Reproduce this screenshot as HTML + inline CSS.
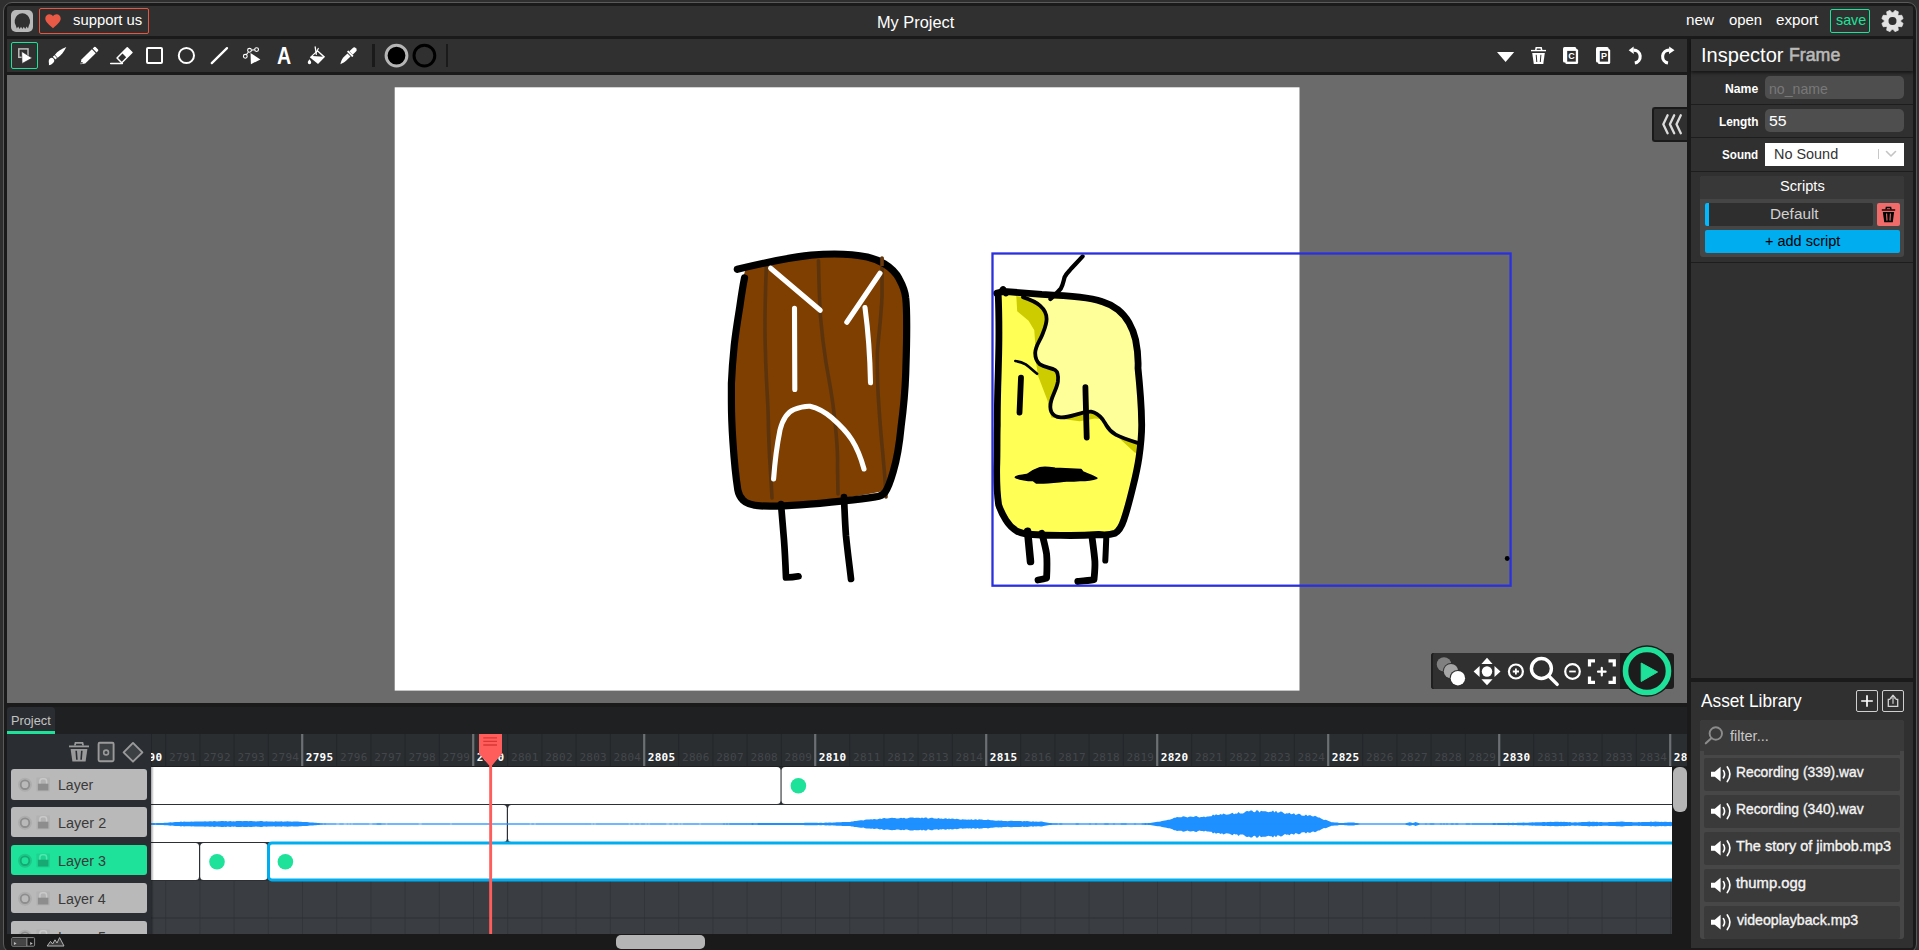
<!DOCTYPE html>
<html lang="en">
<head>
<meta charset="utf-8">
<title>My Project - Wick Editor</title>
<style>
*{box-sizing:border-box;margin:0;padding:0}
html,body{width:1919px;height:950px;overflow:hidden;background:#2f2f2f}
body{position:relative;font-family:"Liberation Sans",sans-serif;color:#fff;font-size:15px}
.abs{position:absolute}
#winframe{position:absolute;left:3px;top:2px;width:1914px;height:950.500px;border:1px solid #5a5a5a;border-radius:9px;background:#1a1a1a}
.panel{position:absolute;background:#303030}
.t{position:absolute;white-space:nowrap;line-height:1}
svg{position:absolute;overflow:visible}
</style>
</head>
<body>
<div id="winframe"></div>
<!-- ===== menu bar ===== -->
<div class="panel" id="menubar" style="left:7px;top:6px;width:1906px;height:30px;border-radius:2px 2px 0 0"></div>
<div class="abs" id="logo" style="left:11px;top:10px;width:22px;height:22px;border-radius:5px;background:#b9b9b9"></div>
<svg style="left:11px;top:10px" width="22" height="22" viewBox="0 0 22 22"><path d="M4.800 15.600 A7.700 8.100 0 1 1 17.900 15.600 L17 18.600 L15.600 16.600 L14.200 19 L12.800 16.700 L11.400 19 L10 16.700 L8.600 19 L7.200 16.600 L5.800 18.600 Z" fill="#303030"/></svg>
<div class="abs" id="support" style="left:39px;top:8px;width:110px;height:26px;border:1px solid #e8563f;border-radius:2px"></div>
<svg style="left:45px;top:14px" width="16" height="15" viewBox="0 0 16 15"><path d="M8 14.200C3.500 10.300.3 7.700.3 4.500.3 2 2.200.3 4.400.3c1.400 0 2.700.7 3.600 1.900C8.900 1 10.200.3 11.600.3c2.200 0 4.100 1.700 4.100 4.200 0 3.200-3.200 5.800-7.700 9.700z" fill="#e85a45"/></svg>
<div class="abs" style="left:1830px;top:9px;width:40px;height:24px;border:1px solid #1ee29a;border-radius:2px"></div>
<svg id="gear" style="left:0;top:0" width="1919" height="40" viewBox="0 0 1919 40"><path fill="#e2e2e2" stroke="#e2e2e2" stroke-width="0.800" stroke-linejoin="round" fill-rule="evenodd" d="M1893.00 12.82 L1894.95 10.38 L1898.28 11.76 L1897.93 14.86 L1898.64 15.57 L1901.74 15.22 L1903.12 18.55 L1900.68 20.50 L1900.68 21.50 L1903.12 23.45 L1901.74 26.78 L1898.64 26.43 L1897.93 27.14 L1898.28 30.24 L1894.95 31.62 L1893.00 29.18 L1892.00 29.18 L1890.05 31.62 L1886.72 30.24 L1887.07 27.14 L1886.36 26.43 L1883.26 26.78 L1881.88 23.45 L1884.32 21.50 L1884.32 20.50 L1881.88 18.55 L1883.26 15.22 L1886.36 15.57 L1887.07 14.86 L1886.72 11.76 L1890.05 10.38 L1892.00 12.82 Z M1888.50 21.00 a4 4 0 1 0 8 0 a4 4 0 1 0 -8 0 Z"/><circle cx="1892.5" cy="21.0" r="3.900" fill="#303030"/></svg>
<!-- ===== toolbar ===== -->
<div class="panel" id="toolbar" style="left:7px;top:39px;width:1680px;height:33px"></div>
<div class="abs" style="left:11px;top:42px;width:27px;height:27px;border:1px solid #1ee29a;border-radius:2px"></div>
<svg id="tools" style="left:0;top:0" width="1700" height="80" viewBox="0 0 1700 80">
 <!-- cursor/select -->
 <rect x="18.800" y="48.900" width="9.200" height="8.400" fill="none" stroke="#bdbdbd" stroke-width="1.500"/>
 <path d="M21.600 51.400 L22.100 63.500 L32.100 58.100 Z" fill="#fff" stroke="#303030" stroke-width="0.600"/>
 <!-- brush -->
 <g transform="translate(57 55.500) rotate(-42.200)" fill="#fff">
  <path d="M-12.600 1.800 C-11 1.200 -10.400 -2.500 -7.300 -2.500 C-5.600 -2.500 -4.700 -1.600 -4.700 0 C-4.700 1.800 -6 2.900 -8 2.900 C-10 2.900 -11.800 2.600 -12.600 1.800 Z"/>
  <rect x="-3.900" y="-1.900" width="2.200" height="3.800"/>
  <path d="M-1 -2 C3 -2.800 8 -1.700 12.600 0 C8 1.700 3 2.800 -1 2 Z"/>
 </g>
 <!-- pencil -->
 <g transform="translate(88.700 56.200) rotate(-44.100)" fill="#fff">
  <path d="M-11.400 0 L-7.500 -2.750 L7.100 -2.750 L7.100 2.750 L-7.500 2.750 Z"/>
  <circle cx="-9.500" cy="0" r="0.850" fill="#303030"/>
  <path d="M8.200 -2.750 L10.300 -2.750 Q11.300 -2.750 11.300 -1.750 L11.300 1.750 Q11.300 2.750 10.300 2.750 L8.200 2.750 Z"/>
 </g>
 <!-- eraser -->
 <g transform="translate(124.500 55.200) rotate(-45)">
  <rect x="-8" y="-4.100" width="16" height="8.200" rx="0.800" fill="#fff"/>
  <rect x="-6.500" y="-2.600" width="6.300" height="5.200" fill="#303030"/>
 </g>
 <path d="M110.700 63.400 L122.400 63.400" stroke="#fff" stroke-width="1.500" stroke-linecap="round"/>
 <!-- rect -->
 <rect x="147" y="48" width="15" height="15" rx="1" fill="none" stroke="#fff" stroke-width="2"/>
 <!-- ellipse -->
 <circle cx="186.400" cy="55.500" r="7.600" fill="none" stroke="#fff" stroke-width="2"/>
 <!-- line -->
 <path d="M211.800 63.100 L227 48.100" stroke="#fff" stroke-width="2.300" stroke-linecap="round"/>
 <!-- path cursor -->
 <g fill="none" stroke="#fff" stroke-width="1.100">
  <path d="M246.300 54.600 L248.500 52 M251.500 50.100 L254.600 49.800"/>
  <circle cx="245.300" cy="56.300" r="1.900"/><circle cx="249.500" cy="50.300" r="1.900"/><circle cx="256.600" cy="49.600" r="1.900"/>
 </g>
 <path d="M250.500 53 L250.900 64.200 L260.400 59.400 Z" fill="#fff"/>
 <!-- text tool -->
 <text transform="translate(284.100 63.800) scale(0.830 1)" x="0" y="0" font-family="Liberation Sans, sans-serif" font-size="23.600" font-weight="bold" fill="#fff" text-anchor="middle">A</text>
 <!-- fill bucket -->
 <path d="M309.800 57.200 L317.500 50.100 L325.100 56.800 L318 64.100 Z" fill="#fff"/>
 <path d="M312.700 55.900 L317.500 51.700 L322.900 56.700 Z" fill="#303030"/>
 <path d="M315.200 47 L316.300 54.400" fill="none" stroke="#fff" stroke-width="1.300" stroke-linecap="round"/>
 <path d="M318.300 48.400 L316.500 52" fill="none" stroke="#fff" stroke-width="1.100" stroke-linecap="round"/>
 <path d="M309.500 59.300 C310.500 60.900 311.200 61.600 311.200 62.500 A1.700 1.700 0 0 1 307.800 62.500 C307.800 61.600 308.500 60.900 309.500 59.300 Z" fill="#fff"/>
 <!-- eyedropper -->
 <g transform="translate(348.050 55.900) rotate(-44.100)" fill="#fff">
  <path d="M-11.200 0.600 C-9.500 -0.600 -7 -1.900 -4.500 -2.200 L1.300 -2.200 L1.300 2.200 L-4.500 2.200 C-7 2.100 -9.500 1.400 -11.200 0.600 Z"/>
  <rect x="2.100" y="-3.800" width="2" height="7.600" rx="0.500"/>
  <path d="M4.200 -2.400 L9 -2.400 Q11 -2.400 11 0 Q11 2.400 9 2.400 L4.200 2.400 Z"/>
 </g>
 <!-- separators & colours -->
 <rect x="372" y="44" width="3" height="23" fill="#1a1a1a"/>
 <circle cx="396.500" cy="55.600" r="10.400" fill="#000" stroke="#b5b5b5" stroke-width="3"/>
 <circle cx="424.400" cy="55.600" r="10.400" fill="#303030" stroke="#000" stroke-width="3"/>
 <rect x="446" y="44" width="2" height="23" fill="#1a1a1a"/>
 <!-- right side -->
 <path d="M1497 52 L1514.200 52 L1505.600 62 Z" fill="#fff"/>
 <!-- trash -->
 <g fill="#fff">
  <path d="M1531 49.900 H1546 V51.300 H1531 Z"/>
  <path d="M1535 50 L1535.600 47 H1541.800 L1542.400 50 H1540.800 L1540.500 48.400 H1536.900 L1536.600 50 Z"/>
  <path d="M1532.200 53 H1544.800 L1543.300 64 H1533.800 Z"/>
 </g>
 <path d="M1536.200 54.800 L1536.800 62 M1540.900 54.800 L1540.300 62" stroke="#303030" stroke-width="1" fill="none"/>
 <!-- copy -->
 <rect x="1563" y="47" width="13.300" height="15.400" rx="1.500" fill="#fff"/>
 <rect x="1565.300" y="49.100" width="12.800" height="14.900" rx="1.500" fill="#fff"/>
 <rect x="1567.200" y="50.900" width="8.600" height="10.700" fill="#303030"/>
 <text x="1571.500" y="59.200" font-family="Liberation Sans, sans-serif" font-size="9" font-weight="bold" fill="#fff" text-anchor="middle">C</text>
 <!-- paste -->
 <rect x="1596" y="47" width="12.600" height="15.400" rx="1.500" fill="#fff"/>
 <rect x="1597.900" y="49.100" width="12.300" height="14.900" rx="1.500" fill="#fff"/>
 <rect x="1599.800" y="50.900" width="8.300" height="10.700" fill="#303030"/>
 <text x="1604" y="59.200" font-family="Liberation Sans, sans-serif" font-size="9" font-weight="bold" fill="#fff" text-anchor="middle">P</text>
 <!-- undo -->
 <path d="M1633.500 50.100 A6.500 6.500 0 0 1 1634.800 63" fill="none" stroke="#fff" stroke-width="3.100"/>
 <path d="M1628.700 50.200 L1633.600 46.400 L1633.800 54 Z" fill="#fff"/>
 <!-- redo -->
 <path d="M1669.300 50.100 A6.500 6.500 0 0 0 1668 63" fill="none" stroke="#fff" stroke-width="3.100"/>
 <path d="M1674.500 50.200 L1669.200 46.400 L1669 54 Z" fill="#fff"/>
</svg>
<!-- ===== canvas ===== -->
<div class="abs" id="canvasarea" style="left:7px;top:75px;width:1680px;height:628px;background:#6b6b6b"></div>
<svg id="stage" style="left:0;top:0" width="1700" height="710" viewBox="0 0 1700 710">
 <rect x="394.700" y="87.300" width="904.800" height="603.300" fill="#fff"/>
 <!-- brown character -->
 <g stroke-linecap="round" stroke-linejoin="round" fill="none">
  <path d="M746.500 266.500 C790 257 850 250 880 260 C903 270 907 290 907.500 325 C907.500 380 905 420 894 470 L886 490 C860 498 800 503 760 504 C745 503 736 498 733.500 470 C730 430 730 380 733 344 C736 315 740 290 743.500 276 Z" fill="#7f3f00" stroke="none"/>
  <path d="M766.400 264.600 C765 300 764.500 330 765.500 353.700 C766 380 768 400 768.300 420 C768.500 450 771 475 772 498" stroke="#5b340d" stroke-width="3.600"/>
  <path d="M818.500 260.800 C819 290 819.500 300 820.400 315.800 C822 335 824 350 826.100 363.200 C829 380 832 395 833.700 410.500 C836 430 838 450 837.500 465 L838 494" stroke="#5b340d" stroke-width="3.600"/>
  <path d="M882 258 L882 296.800 C881 320 878 340 877.300 353.700 C877 375 878 395 879.200 410.500 C881 440 885 470 886 497" stroke="#5b340d" stroke-width="3.600"/>
  <path d="M 737.3 269.3 C 767.5 261.9 790.3 257.4 811.1 255.1 C 824.9 253.9 849.7 253.4 867.3 257.0 C 875.4 258.9 879.4 260.9 884.1 263.6 C 891.3 268.0 896.2 273.0 899.2 278.9 C 903.1 286.0 905.1 291.0 905.7 297.9 C 906.7 306.1 906.7 316.1 906.7 326.5 C 906.7 346.3 906.1 361.3 905.7 374.0 C 905.1 391.4 903.1 411.5 901.1 426.6 C 899.2 446.7 896.2 461.7 893.2 471.8 C 890.3 481.8 888.3 487.8 885.3 491.8 C 882.4 495.9 879.4 496.4 875.4 496.9 C 864.5 498.9 854.6 499.9 843.8 500.9 C 829.9 502.4 815.0 503.9 800.2 504.9 C 785.3 505.9 770.5 506.4 760.6 505.9 C 752.7 505.4 746.7 503.9 742.8 499.9 C 739.3 495.9 738.3 492.8 737.8 489.8 C 734.9 471.8 733.9 456.7 732.9 441.6 C 731.9 426.6 731.4 411.5 731.4 401.5 C 731.4 391.4 731.4 386.4 731.4 383.4 C 731.9 371.4 732.9 358.3 734.2 345.5 C 735.8 331.2 737.8 319.2 739.7 307.4 C 741.3 296.1 742.8 286.0 744.5 278.0" stroke="#000" stroke-width="7.200"/>
  <path d="M882 257.500 L882 266" stroke="#6a3a10" stroke-width="3.600" stroke-linecap="butt"/>
  <path d="M781 504 C782 516 783 528 784 540 C785 553 785.500 565 786 577.500 C791 577.500 795 577 798.500 576.300" stroke="#000" stroke-width="6.700"/>
  <path d="M844 497 C844.500 510 845 523 846 536 C847.500 551 849.500 566 851 579" stroke="#000" stroke-width="6.700"/>
  <g stroke="#fff" stroke-width="5.100">
   <path d="M770.600 268.200 L820.200 310.300"/>
   <path d="M880 273.300 L846.800 322.200"/>
   <path d="M794.500 308.400 L794.800 389.500"/>
   <path d="M865 307.500 C868 330 870 355 870.500 382.800"/>
   <path d="M773.600 479 C775 460 777 445 780 430 C783 418 788 412 794 409.500 C800 407 805 406 810 406.200 C818 408 825 412 832 418 C840 425 847 432 852 440 C857 448 861 458 864 469"/>
  </g>
 </g>
 <!-- yellow character -->
 <g stroke-linecap="round" stroke-linejoin="round" fill="none">
  <path d="M998 294 C1030 292 1060 294 1080 297 C1100 300 1112 305 1118 310 C1126 318 1132 330 1135.500 340 C1139 360 1141 380 1142.300 397 C1143.200 410 1143 420 1142.800 430 C1142 445 1141 452 1140.400 457.400 C1139 470 1137 478 1134.700 486 C1131 500 1128 510 1125 520 C1122 528 1119 532 1115.700 533.500 C1110 535 1104 535 1098.700 535 C1085 536 1072 536.500 1060.800 536 C1050 536 1040 535.500 1032.400 535 C1026 534 1021 533 1017 531.300 C1012 528 1008 524 1005.800 520 C1002 514 1000 509 999.200 504.700 C998 492 997.300 480 997.300 466.800 C997.300 447 997 430 996.800 420 C996.800 409 997 398 997.300 387 C998 371 998.300 356 998.300 340 C998.300 322 998.300 308 998 294 Z" fill="#ffff55" stroke="none"/>
  <path d="M1022.900 297.100 C1030 299.500 1036 302 1040 305.600 C1045 310 1046.600 314 1046.600 318.900 C1046.600 325 1044 330 1041.800 335.900 C1039 342 1035.200 347 1035.200 353 C1035.200 358 1037 362 1040 364.400 C1045 367.500 1051 367.500 1055.100 370 C1058 372 1058.500 376 1057.900 381.400 C1057 388 1053 394 1051.300 400.400 C1050 405 1049.800 408 1051.300 411.700 C1053 415.500 1056 417 1060.800 417.400 C1067 417.800 1074 415 1079.700 413.600 C1084 412.500 1088 411.500 1091.100 411.700 C1096 412.500 1099.500 415.500 1102.500 419.300 C1104 421.500 1105.500 423.500 1106.300 425.200 C1108.500 429 1112 432.500 1115.700 434.600 C1122 438 1130 440.500 1139.600 443.200 C1141 440 1142.500 425 1142.800 410 C1142 385 1140 365 1136 340 C1132 328 1126 317 1118 310 C1110 304 1098 300 1080 297.400 C1060 295 1040 294 1022.900 294.500 Z" fill="#ffff99" stroke="none"/>
  <path d="M1016.300 296 L1017.200 311.300 L1028.600 320.800 L1034.300 330.300 L1035.200 343.500 L1035.200 353 C1035.200 347 1039 342 1041.800 335.900 C1044 330 1046.600 325 1046.600 318.900 C1046.600 314 1045 310 1040 305.600 C1036 302 1030 299.500 1022.900 297.100 Z" fill="#cccc00" stroke="none"/>
  <path d="M1036 362 L1038 375.700 L1047.500 400.400 L1051.300 417.400 L1079.700 421.200 L1094.900 418.400 L1102.500 419.300 C1099.500 415.500 1096 412.500 1091.100 411.700 C1088 411.500 1084 412.500 1079.700 413.600 C1074 415 1067 417.800 1060.800 417.400 C1056 417 1053 415.500 1051.300 411.700 C1049.800 408 1050 405 1051.300 400.400 C1053 394 1057 388 1057.900 381.400 C1058.500 376 1058 372 1055.100 370 C1051 367.500 1045 367.500 1040 364.400 Z" fill="#cccc00" stroke="none"/>
  <path d="M1115.700 434.600 C1122 438 1130 440.500 1139.600 443.200 L1138 453.500 L1134.700 452.600 L1121.400 440.300 Z" fill="#cccc00" stroke="none"/>
  <path d="M1022.900 297.100 C1030 299.500 1036 302 1040 305.600 C1045 310 1046.600 314 1046.600 318.900 C1046.600 325 1044 330 1041.800 335.900 C1039 342 1035.200 347 1035.200 353 C1035.200 358 1037 362 1040 364.400 C1045 367.500 1051 367.500 1055.100 370 C1058 372 1058.500 376 1057.900 381.400 C1057 388 1053 394 1051.300 400.400 C1050 405 1049.800 408 1051.300 411.700 C1053 415.500 1056 417 1060.800 417.400 C1067 417.800 1074 415 1079.700 413.600 C1084 412.500 1088 411.500 1091.100 411.700 C1096 412.500 1099.500 415.500 1102.500 419.300 C1104 421.500 1105.500 423.500 1106.300 425.200 C1108.500 429 1112 432.500 1115.700 434.600 C1122 438 1130 440.500 1138.600 443.200" stroke="#000" stroke-width="3.800"/>
  <path d="M1003 289.500 L1006 293 M996.600 293.300 C1000 292 1003 291.500 1006 291.600 C1018 292.500 1030 293.500 1041.800 294.300 C1055 295 1068 295.800 1079.700 297.100 C1088 298 1096 299.500 1102.500 301.800 C1108 303.500 1113 306 1117.600 309.400 C1122 313 1126 317.500 1129 322.700 C1132 328 1134 333 1135.600 339.700 C1137.500 349 1138.500 358 1138 368.200 C1139 378 1139.800 387 1140.500 396.700 C1141.200 406 1141.600 415 1141.700 425 C1141.700 436 1140.500 447 1139 457.400 C1137.600 467 1135.600 476 1133.200 485.800 C1130.500 497 1127.500 509 1123.800 519.900 C1121.800 526 1119 531 1115 533.200 C1110 535 1104 535 1098.700 534.500 C1086 535.400 1073 535.700 1060.800 535.400 C1051 535.400 1041 535.100 1032.400 534.500 C1027 534.500 1022 533.500 1017.200 531.300 C1012.500 528.500 1008.500 524.500 1005.800 519.900 C1002.500 514.500 1000.300 510 998.600 504.700 C996.800 492 996.500 480 996.700 466.800 C997.300 452 996.800 438 997.300 425 C997.200 412 997.500 400 997.800 387.100 C998.300 371 998.800 355 998.900 339.700 C999 324 998.800 308 998.200 294.300" stroke="#000" stroke-width="6.800"/>
  <path d="M1050.400 299 C1054 295.500 1058 292 1060.800 288.600 C1063 285 1063.500 281 1064.600 277.200 C1066 274 1068 272 1070.300 269.600 C1074.500 265 1078.500 261 1082.600 256.400" stroke="#000" stroke-width="4.200"/>
  <path d="M1015.300 361 C1019 361.500 1022.500 362.500 1025.700 364.400 C1029.500 367 1033 370.500 1037.100 373.800" stroke="#000" stroke-width="2.600"/>
  <path d="M1021 377.600 C1020.500 389 1020 401 1019.500 412.700" stroke="#000" stroke-width="5.800"/>
  <path d="M1085.400 387.100 C1085.800 404 1086.200 421 1086.700 437.500" stroke="#000" stroke-width="5.800"/>
  <path d="M1015.300 477.300 C1016 475.500 1022 475.500 1027 474.500 C1031 471.500 1035 469.500 1039.900 467.800 C1045 466.500 1050 467.500 1055 468.300 L1081 469.500 L1083 472 C1088 474 1093 476 1096.800 478.200 C1092 480 1086 480.500 1080 480.500 C1075 481 1071 481 1066.500 481 C1056 482 1046 483.500 1036.200 483 L1033 480.500 C1027 480.500 1021 480 1015.300 477.300 Z" fill="#000" stroke="#000" stroke-width="1.500"/>
  <path d="M1027.600 531.300 C1028.500 541 1029.500 551 1030.500 561.600" stroke="#000" stroke-width="7.500"/>
  <path d="M1041.800 533.200 C1043.500 540 1045.500 547 1046.600 554 C1047.300 562 1047 570 1046.600 578 C1044 579 1041 579.500 1038 580" stroke="#000" stroke-width="6.800"/>
  <path d="M1092 537 C1093 545 1094.300 553 1094.900 561.600 C1095.200 568 1094.500 574 1094 579.600 C1088.500 580.500 1083 581 1077.800 581.500" stroke="#000" stroke-width="6.800"/>
  <path d="M1106.300 537 C1106 545 1105.700 553 1105.300 560.600" stroke="#000" stroke-width="6"/>
 </g>
 <!-- selection -->
 <rect x="992.500" y="253.500" width="518.100" height="332.200" fill="none" stroke="#2b30de" stroke-width="2.300"/>
 <circle cx="1507.200" cy="558.500" r="2.400" fill="#000"/>
</svg>
<!-- ===== canvas floating controls ===== -->
<div class="abs" id="collapse" style="left:1652px;top:107px;width:35px;height:35px;border:2px solid #1a1a1a;border-right:none;border-radius:3px 0 0 3px;background:#303030"></div>
<svg style="left:1652px;top:107px" width="35" height="35" viewBox="0 0 35 35"><path d="M15.600 8.300 L11.300 17.300 L15.600 26.300 M22.200 8.300 L17.900 17.300 L22.200 26.300 M28.800 8.300 L24.500 17.300 L28.800 26.300" fill="none" stroke="#dcdcdc" stroke-width="2.300" stroke-linecap="round" stroke-linejoin="round"/></svg>
<div class="abs" id="floatbar" style="left:1431px;top:653px;width:243px;height:36px;border-radius:3px;background:#1c1c1c"></div>
<div class="abs" style="left:1431px;top:653px;width:189px;height:36px;border-radius:3px 0 0 3px;background:#303030;border-left:2px solid #1f1f1f"></div>
<svg id="floaticons" style="left:1420px;top:630px" width="270" height="80" viewBox="1420 630 270 80">
 <!-- onion skin -->
 <circle cx="1444" cy="664.400" r="7.200" fill="#808080"/>
 <circle cx="1451" cy="671.200" r="8.200" fill="#303030"/><circle cx="1451" cy="671.200" r="7.200" fill="#a6a6a6"/>
 <circle cx="1457.900" cy="678.200" r="8.300" fill="#303030"/><circle cx="1457.900" cy="678.200" r="7.200" fill="#fff"/>
 <!-- pan -->
 <g fill="#fff"><circle cx="1487" cy="671.500" r="5.200"/>
 <path d="M1487 657.800 L1492.600 663.900 H1481.400 Z M1487 685.300 L1492.600 679.200 H1481.400 Z M1473.600 671.500 L1479.600 666 V677 Z M1500.500 671.500 L1494.500 666 V677 Z"/></g>
 <!-- zoom in -->
 <circle cx="1515.900" cy="671.500" r="7" fill="none" stroke="#fff" stroke-width="2.200"/>
 <path d="M1512.800 671.500 H1519 M1515.900 668.400 V674.600" stroke="#fff" stroke-width="1.800" fill="none"/>
 <!-- magnifier -->
 <circle cx="1541.400" cy="668.500" r="10" fill="none" stroke="#fff" stroke-width="3.400"/>
 <path d="M1548.800 676 L1557.200 684.400" stroke="#fff" stroke-width="3.400" stroke-linecap="round"/>
 <!-- zoom out -->
 <circle cx="1572.500" cy="671.500" r="7.300" fill="none" stroke="#fff" stroke-width="2.200"/>
 <path d="M1569.200 671.500 H1575.800" stroke="#fff" stroke-width="1.800" fill="none"/>
 <!-- recenter -->
 <path d="M1589.500 666.500 V660.800 H1595 M1608.500 660.800 H1614.300 V666.500 M1614.300 676.500 V682.300 H1608.500 M1595 682.300 H1589.500 V676.500" fill="none" stroke="#fff" stroke-width="3.200"/>
 <path d="M1598 671.700 H1605.600 M1601.800 667.900 V675.500" stroke="#fff" stroke-width="2.200" fill="none" stroke-linecap="round"/>
 <!-- play -->
 <circle cx="1647" cy="671" r="25.800" fill="#1c1c1c"/>
 <circle cx="1647" cy="671" r="21.500" fill="#1c1c1c" stroke="#1ee29a" stroke-width="5.600"/>
 <path d="M1641.200 663 L1657.600 672 L1641.200 681.500 Z" fill="#1ee29a" stroke="#1ee29a" stroke-width="1" stroke-linejoin="round"/>
</svg>
<!-- ===== inspector ===== -->
<div class="panel" id="inspbody" style="left:1691px;top:71px;width:222px;height:607px"></div>
<div class="panel" id="insphead" style="left:1691px;top:39px;width:222px;height:32px;box-shadow:0 2px 3px rgba(0,0,0,.55)"></div>
<!-- rows -->
<div class="abs" style="left:1691px;top:104px;width:222px;height:1px;background:#1d1d1d"></div>
<div class="abs" style="left:1691px;top:137px;width:222px;height:1px;background:#1d1d1d"></div>
<div class="abs" style="left:1691px;top:171px;width:222px;height:1px;background:#1d1d1d"></div>
<div class="abs" style="left:1691px;top:262px;width:222px;height:1px;background:#1d1d1d"></div>
<div class="abs" style="left:1765px;top:76px;width:139px;height:23px;border-radius:5px;background:#4e4e4e"></div>
<div class="abs" style="left:1765px;top:109px;width:139px;height:23px;border-radius:5px;background:#4e4e4e"></div>
<div class="abs" style="left:1765px;top:143px;width:139px;height:23px;background:#fff"></div>
<div class="abs" style="left:1878px;top:149px;width:1px;height:10px;background:#c8c8c8"></div>
<svg style="left:1885px;top:150px" width="12" height="8" viewBox="0 0 12 8"><path d="M1.500 1.500 L6 6 L10.500 1.500" fill="none" stroke="#c4c4c4" stroke-width="1.600" stroke-linecap="round" stroke-linejoin="round"/></svg>
<!-- scripts -->
<div class="abs" style="left:1700px;top:176px;width:204px;height:81px;border-radius:3px;background:#454545"></div>
<div class="abs" style="left:1700px;top:176px;width:204px;height:23px;border-radius:3px 3px 0 0;background:#383838"></div>
<div class="abs" style="left:1705px;top:203px;width:168px;height:23px;border-radius:2px;background:#2e2e2e;border-left:4px solid #00b9ff"></div>
<div class="abs" style="left:1877px;top:203px;width:23px;height:23px;border-radius:2px;background:#f16b6b"></div>
<svg style="left:1877px;top:203px" width="23" height="23" viewBox="0 0 23 23">
 <g fill="#000"><path d="M4.800 6.300 H18.200 V7.700 H4.800 Z"/><path d="M8.300 6.400 L8.800 3.800 H14.200 L14.700 6.400 H13.300 L13 5.200 H10 L9.700 6.400 Z"/><path d="M5.900 9 H17.100 L15.800 19.200 H7.200 Z"/></g>
 <path d="M9.600 10.500 L10 17.600 M13.400 10.500 L13 17.600" stroke="#f16b6b" stroke-width="1.100" fill="none"/>
</svg>
<div class="abs" style="left:1705px;top:230px;width:195px;height:23px;border-radius:2px;background:#00adef"></div>
<!-- ===== asset library ===== -->
<div class="panel" id="assetpanel" style="left:1691px;top:682px;width:222px;height:266px;border-radius:0 0 2px 0"></div>
<div class="abs" style="left:1856px;top:690px;width:22px;height:22px;border:1px solid #cfcfcf;border-radius:2px"></div>
<svg style="left:1856px;top:690px" width="22" height="22" viewBox="0 0 22 22"><path d="M11 5.200 V16.800 M5.200 11 H16.800" stroke="#fff" stroke-width="1.700" fill="none"/></svg>
<div class="abs" style="left:1882px;top:690px;width:22px;height:22px;border:1px solid #cfcfcf;border-radius:2px"></div>
<svg style="left:1882px;top:690px" width="22" height="22" viewBox="0 0 22 22"><path d="M8.400 9.300 H6.300 V16.400 H15.700 V9.300 H13.600" fill="none" stroke="#d2d2d2" stroke-width="1.300"/><rect x="10" y="7.600" width="2" height="6.200" fill="#8e8e8e"/><path d="M7.900 8.900 L11 5.200 L14.100 8.900" fill="#8e8e8e" stroke="#d2d2d2" stroke-width="1.200" stroke-linejoin="round"/></svg>
<div class="abs" style="left:1700px;top:720px;width:204px;height:219px;border-radius:3px;background:#474747"></div>
<div class="abs" style="left:1700px;top:720px;width:204px;height:35px;border-radius:3px 3px 0 0;background:#3a3a3a"></div>
<div class="abs" style="left:1700px;top:751px;width:4px;height:5px;background:#474747"></div><div class="abs" style="left:1900px;top:751px;width:4px;height:5px;background:#474747"></div>
<svg style="left:1704px;top:725px" width="20" height="20" viewBox="0 0 20 20"><circle cx="11.800" cy="8.500" r="6.200" fill="none" stroke="#8c8c8c" stroke-width="1.900"/><path d="M7.300 13.200 L1.800 18.300" stroke="#8c8c8c" stroke-width="2.100" stroke-linecap="round"/></svg>
<div class="abs" style="left:1704px;top:758px;width:196px;height:33px;border-radius:2px;background:#3a3a3a"></div>
<svg style="left:1710px;top:765px" width="23" height="19" viewBox="0 0 23 19"><path d="M1 6.700 H4.800 L10.600 1.800 V16.600 L4.800 11.700 H1 Z" fill="#fff"/><path d="M13.400 5.600 Q15.800 9.200 13.400 12.800 M17.300 1.900 Q22.600 9.200 17.300 16.500" fill="none" stroke="#fff" stroke-width="1.700" stroke-linecap="round"/></svg>
<div class="abs" style="left:1704px;top:795px;width:196px;height:33px;border-radius:2px;background:#3a3a3a"></div>
<svg style="left:1710px;top:802px" width="23" height="19" viewBox="0 0 23 19"><path d="M1 6.700 H4.800 L10.600 1.800 V16.600 L4.800 11.700 H1 Z" fill="#fff"/><path d="M13.400 5.600 Q15.800 9.200 13.400 12.800 M17.300 1.900 Q22.600 9.200 17.300 16.500" fill="none" stroke="#fff" stroke-width="1.700" stroke-linecap="round"/></svg>
<div class="abs" style="left:1704px;top:832px;width:196px;height:33px;border-radius:2px;background:#3a3a3a"></div>
<svg style="left:1710px;top:839px" width="23" height="19" viewBox="0 0 23 19"><path d="M1 6.700 H4.800 L10.600 1.800 V16.600 L4.800 11.700 H1 Z" fill="#fff"/><path d="M13.400 5.600 Q15.800 9.200 13.400 12.800 M17.300 1.900 Q22.600 9.200 17.300 16.500" fill="none" stroke="#fff" stroke-width="1.700" stroke-linecap="round"/></svg>
<div class="abs" style="left:1704px;top:869px;width:196px;height:33px;border-radius:2px;background:#3a3a3a"></div>
<svg style="left:1710px;top:876px" width="23" height="19" viewBox="0 0 23 19"><path d="M1 6.700 H4.800 L10.600 1.800 V16.600 L4.800 11.700 H1 Z" fill="#fff"/><path d="M13.400 5.600 Q15.800 9.200 13.400 12.800 M17.300 1.900 Q22.600 9.200 17.300 16.500" fill="none" stroke="#fff" stroke-width="1.700" stroke-linecap="round"/></svg>
<div class="abs" style="left:1704px;top:906px;width:196px;height:33px;border-radius:2px;background:#3a3a3a"></div>
<svg style="left:1710px;top:913px" width="23" height="19" viewBox="0 0 23 19"><path d="M1 6.700 H4.800 L10.600 1.800 V16.600 L4.800 11.700 H1 Z" fill="#fff"/><path d="M13.400 5.600 Q15.800 9.200 13.400 12.800 M17.300 1.900 Q22.600 9.200 17.300 16.500" fill="none" stroke="#fff" stroke-width="1.700" stroke-linecap="round"/></svg>
<!-- ===== timeline ===== -->
<div class="abs" id="tl-tabbar" style="left:7px;top:707px;width:1680px;height:27px;background:#1f2022"></div>
<div class="abs" id="tl-tab" style="left:7px;top:707px;width:48px;height:27px;background:#2a2e32;border-radius:4px 4px 0 0;border-bottom:3px solid #1ee29a"></div>
<div class="abs" id="tl-body" style="left:7px;top:734px;width:1680px;height:200px;background:#2a2e32"></div>
<div class="abs" id="tl-bottom" style="left:7px;top:934px;width:1680px;height:30px;background:#1a1a1a"></div>
<div class="abs" id="tl-frames" style="left:151px;top:767px;width:1521px;height:167px;background:#3a3e42"></div>
<div class="abs" id="tl-vscroll" style="left:1672px;top:767px;width:15px;height:167px;background:#1a1a1a"></div>
<div class="abs" style="left:1673px;top:767px;width:13.500px;height:45px;border-radius:6px;background:#b5b5b5"></div>
<div class="abs" style="left:616px;top:935px;width:89px;height:14px;border-radius:5px;background:#b5b5b5"></div>
<svg id="tl-svg" style="left:0;top:0" width="1700" height="950" viewBox="0 0 1700 950">
<defs><clipPath id="clipF"><rect x="151" y="734" width="1521" height="200"/></clipPath><clipPath id="clipS"><rect x="151" y="734" width="1536" height="33"/></clipPath><linearGradient id="shL" x1="0" y1="0" x2="1" y2="0"><stop offset="0" stop-color="#000" stop-opacity="0.350"/><stop offset="1" stop-color="#000" stop-opacity="0"/></linearGradient></defs>
<rect x="151" y="734" width="1536" height="32" fill="#2a2e31"/>
<rect x="151" y="766" width="1536" height="1" fill="#1c1e20"/>
<rect x="151" y="734" width="1" height="32" fill="#22252a"/>
<g clip-path="url(#clipS)">
<rect x="130.1" y="734" width="2.200" height="32" fill="#6c7074"/>
<rect x="165.2" y="734" width="1" height="32" fill="#23262a"/>
<rect x="199.4" y="734" width="1" height="32" fill="#23262a"/>
<rect x="233.6" y="734" width="1" height="32" fill="#23262a"/>
<rect x="267.8" y="734" width="1" height="32" fill="#23262a"/>
<rect x="301.1" y="734" width="2.200" height="32" fill="#6c7074"/>
<rect x="336.2" y="734" width="1" height="32" fill="#23262a"/>
<rect x="370.4" y="734" width="1" height="32" fill="#23262a"/>
<rect x="404.6" y="734" width="1" height="32" fill="#23262a"/>
<rect x="438.8" y="734" width="1" height="32" fill="#23262a"/>
<rect x="472.1" y="734" width="2.200" height="32" fill="#6c7074"/>
<rect x="507.2" y="734" width="1" height="32" fill="#23262a"/>
<rect x="541.4" y="734" width="1" height="32" fill="#23262a"/>
<rect x="575.6" y="734" width="1" height="32" fill="#23262a"/>
<rect x="609.8" y="734" width="1" height="32" fill="#23262a"/>
<rect x="643.1" y="734" width="2.200" height="32" fill="#6c7074"/>
<rect x="678.2" y="734" width="1" height="32" fill="#23262a"/>
<rect x="712.4" y="734" width="1" height="32" fill="#23262a"/>
<rect x="746.6" y="734" width="1" height="32" fill="#23262a"/>
<rect x="780.8" y="734" width="1" height="32" fill="#23262a"/>
<rect x="814.1" y="734" width="2.200" height="32" fill="#6c7074"/>
<rect x="849.2" y="734" width="1" height="32" fill="#23262a"/>
<rect x="883.4" y="734" width="1" height="32" fill="#23262a"/>
<rect x="917.6" y="734" width="1" height="32" fill="#23262a"/>
<rect x="951.8" y="734" width="1" height="32" fill="#23262a"/>
<rect x="985.1" y="734" width="2.200" height="32" fill="#6c7074"/>
<rect x="1020.2" y="734" width="1" height="32" fill="#23262a"/>
<rect x="1054.4" y="734" width="1" height="32" fill="#23262a"/>
<rect x="1088.6" y="734" width="1" height="32" fill="#23262a"/>
<rect x="1122.8" y="734" width="1" height="32" fill="#23262a"/>
<rect x="1156.1" y="734" width="2.200" height="32" fill="#6c7074"/>
<rect x="1191.2" y="734" width="1" height="32" fill="#23262a"/>
<rect x="1225.4" y="734" width="1" height="32" fill="#23262a"/>
<rect x="1259.6" y="734" width="1" height="32" fill="#23262a"/>
<rect x="1293.8" y="734" width="1" height="32" fill="#23262a"/>
<rect x="1327.1" y="734" width="2.200" height="32" fill="#6c7074"/>
<rect x="1362.2" y="734" width="1" height="32" fill="#23262a"/>
<rect x="1396.4" y="734" width="1" height="32" fill="#23262a"/>
<rect x="1430.6" y="734" width="1" height="32" fill="#23262a"/>
<rect x="1464.8" y="734" width="1" height="32" fill="#23262a"/>
<rect x="1498.1" y="734" width="2.200" height="32" fill="#6c7074"/>
<rect x="1533.2" y="734" width="1" height="32" fill="#23262a"/>
<rect x="1567.4" y="734" width="1" height="32" fill="#23262a"/>
<rect x="1601.6" y="734" width="1" height="32" fill="#23262a"/>
<rect x="1635.8" y="734" width="1" height="32" fill="#23262a"/>
<rect x="1669.1" y="734" width="2.200" height="32" fill="#6c7074"/>
<rect x="1704.2" y="734" width="1" height="32" fill="#23262a"/>
</g>
<g clip-path="url(#clipF)">
<rect x="131.0" y="881" width="1" height="53" fill="#32363a"/>
<rect x="165.2" y="881" width="1" height="53" fill="#32363a"/>
<rect x="199.4" y="881" width="1" height="53" fill="#32363a"/>
<rect x="233.6" y="881" width="1" height="53" fill="#32363a"/>
<rect x="267.8" y="881" width="1" height="53" fill="#32363a"/>
<rect x="302.0" y="881" width="1" height="53" fill="#32363a"/>
<rect x="336.2" y="881" width="1" height="53" fill="#32363a"/>
<rect x="370.4" y="881" width="1" height="53" fill="#32363a"/>
<rect x="404.6" y="881" width="1" height="53" fill="#32363a"/>
<rect x="438.8" y="881" width="1" height="53" fill="#32363a"/>
<rect x="473.0" y="881" width="1" height="53" fill="#32363a"/>
<rect x="507.2" y="881" width="1" height="53" fill="#32363a"/>
<rect x="541.4" y="881" width="1" height="53" fill="#32363a"/>
<rect x="575.6" y="881" width="1" height="53" fill="#32363a"/>
<rect x="609.8" y="881" width="1" height="53" fill="#32363a"/>
<rect x="644.0" y="881" width="1" height="53" fill="#32363a"/>
<rect x="678.2" y="881" width="1" height="53" fill="#32363a"/>
<rect x="712.4" y="881" width="1" height="53" fill="#32363a"/>
<rect x="746.6" y="881" width="1" height="53" fill="#32363a"/>
<rect x="780.8" y="881" width="1" height="53" fill="#32363a"/>
<rect x="815.0" y="881" width="1" height="53" fill="#32363a"/>
<rect x="849.2" y="881" width="1" height="53" fill="#32363a"/>
<rect x="883.4" y="881" width="1" height="53" fill="#32363a"/>
<rect x="917.6" y="881" width="1" height="53" fill="#32363a"/>
<rect x="951.8" y="881" width="1" height="53" fill="#32363a"/>
<rect x="986.0" y="881" width="1" height="53" fill="#32363a"/>
<rect x="1020.2" y="881" width="1" height="53" fill="#32363a"/>
<rect x="1054.4" y="881" width="1" height="53" fill="#32363a"/>
<rect x="1088.6" y="881" width="1" height="53" fill="#32363a"/>
<rect x="1122.8" y="881" width="1" height="53" fill="#32363a"/>
<rect x="1157.0" y="881" width="1" height="53" fill="#32363a"/>
<rect x="1191.2" y="881" width="1" height="53" fill="#32363a"/>
<rect x="1225.4" y="881" width="1" height="53" fill="#32363a"/>
<rect x="1259.6" y="881" width="1" height="53" fill="#32363a"/>
<rect x="1293.8" y="881" width="1" height="53" fill="#32363a"/>
<rect x="1328.0" y="881" width="1" height="53" fill="#32363a"/>
<rect x="1362.2" y="881" width="1" height="53" fill="#32363a"/>
<rect x="1396.4" y="881" width="1" height="53" fill="#32363a"/>
<rect x="1430.6" y="881" width="1" height="53" fill="#32363a"/>
<rect x="1464.8" y="881" width="1" height="53" fill="#32363a"/>
<rect x="1499.0" y="881" width="1" height="53" fill="#32363a"/>
<rect x="1533.2" y="881" width="1" height="53" fill="#32363a"/>
<rect x="1567.4" y="881" width="1" height="53" fill="#32363a"/>
<rect x="1601.6" y="881" width="1" height="53" fill="#32363a"/>
<rect x="1635.8" y="881" width="1" height="53" fill="#32363a"/>
<rect x="1670.0" y="881" width="1" height="53" fill="#32363a"/>
<rect x="1704.2" y="881" width="1" height="53" fill="#32363a"/>
<rect x="151" y="917.400" width="1521" height="1.200" fill="#2f3337"/>
<rect x="151" y="767" width="1521" height="114.0" fill="#2c2f33"/>
<rect x="140.0" y="767.0" width="640.5" height="37.0" rx="3.5" fill="#fff"/>
<rect x="781.6" y="767.0" width="908.4" height="37.0" rx="3.5" fill="#fff"/>
<rect x="140.0" y="805.0" width="366.8" height="37.0" rx="3.5" fill="#fff"/>
<rect x="508.0" y="805.0" width="1182.0" height="37.0" rx="3.5" fill="#fff"/>
<rect x="140.0" y="843.0" width="59.0" height="37.0" rx="3.5" fill="#fff"/>
<rect x="200.2" y="843.0" width="67.2" height="37.0" rx="3.5" fill="#fff"/>
<rect x="268.5" y="843.0" width="1421.5" height="37.0" rx="3.5" fill="#fff"/>
<circle cx="798.4" cy="785.7" r="7.800" fill="#1ee29a"/>
<circle cx="217.0" cy="861.7" r="7.800" fill="#1ee29a"/>
<circle cx="285.4" cy="861.7" r="7.800" fill="#1ee29a"/>
<path d="M151.0 823.2 L152.5 823.2 L154.0 823.1 L155.5 823.2 L157.0 823.0 L158.5 823.0 L160.0 823.0 L161.5 822.9 L163.0 823.0 L164.5 822.8 L166.0 822.8 L167.5 822.7 L169.0 822.6 L170.5 822.3 L172.0 822.5 L173.5 822.3 L175.0 822.1 L176.5 821.9 L178.0 821.9 L179.5 821.9 L181.0 821.6 L182.5 822.0 L184.0 821.6 L185.5 821.8 L187.0 821.8 L188.5 821.8 L190.0 821.7 L191.5 821.4 L193.0 821.7 L194.5 821.5 L196.0 821.4 L197.5 821.5 L199.0 821.4 L200.5 821.6 L202.0 821.6 L203.5 821.5 L205.0 821.3 L206.5 821.4 L208.0 821.4 L209.5 821.3 L211.0 821.3 L212.5 821.4 L214.0 821.1 L215.5 821.2 L217.0 821.4 L218.5 821.2 L220.0 821.2 L221.5 821.0 L223.0 821.1 L224.5 821.3 L226.0 820.9 L227.5 821.4 L229.0 821.2 L230.5 821.0 L232.0 821.4 L233.5 821.2 L235.0 821.4 L236.5 821.0 L238.0 821.0 L239.5 821.1 L241.0 820.9 L242.5 821.2 L244.0 821.0 L245.5 821.1 L247.0 821.1 L248.5 821.2 L250.0 821.0 L251.5 821.0 L253.0 821.2 L254.5 821.2 L256.0 821.5 L257.5 821.2 L259.0 821.2 L260.5 821.0 L262.0 821.1 L263.5 821.4 L265.0 821.4 L266.5 821.3 L268.0 821.6 L269.5 821.4 L271.0 821.6 L272.5 821.6 L274.0 821.7 L275.5 821.3 L277.0 821.6 L278.5 821.6 L280.0 821.5 L281.5 821.3 L283.0 821.7 L284.5 821.5 L286.0 821.5 L287.5 821.3 L289.0 821.4 L290.5 821.4 L292.0 821.7 L293.5 821.6 L295.0 821.6 L296.5 821.4 L298.0 821.4 L299.5 821.8 L301.0 821.8 L302.5 821.9 L304.0 822.0 L305.5 822.0 L307.0 822.1 L308.5 822.3 L310.0 822.5 L311.5 822.5 L313.0 822.6 L314.5 822.7 L316.0 822.7 L317.5 822.9 L319.0 823.1 L320.5 823.2 L322.0 823.3 L323.5 823.4 L325.0 823.3 L326.5 823.4 L328.0 823.4 L329.5 823.5 L331.0 823.5 L332.5 823.6 L334.0 823.6 L335.5 823.6 L337.0 823.7 L338.5 823.7 L340.0 823.6 L341.5 823.6 L343.0 823.6 L344.5 823.7 L346.0 823.7 L347.5 823.6 L349.0 823.7 L350.5 823.6 L352.0 823.7 L353.5 823.6 L355.0 823.6 L356.5 823.6 L358.0 823.6 L359.5 823.6 L361.0 823.6 L362.5 823.6 L364.0 823.6 L365.5 823.6 L367.0 823.6 L368.5 823.6 L370.0 823.7 L371.5 823.7 L373.0 823.6 L374.5 823.6 L376.0 823.5 L377.5 823.3 L379.0 823.2 L380.5 823.2 L382.0 823.5 L383.5 823.6 L385.0 823.6 L386.5 823.7 L388.0 823.6 L389.5 823.6 L391.0 823.6 L392.5 823.6 L394.0 823.6 L395.5 823.6 L397.0 823.6 L398.5 823.6 L400.0 823.6 L401.5 823.6 L403.0 823.6 L404.5 823.6 L406.0 823.6 L407.5 823.6 L409.0 823.6 L410.5 823.6 L412.0 823.6 L413.5 823.6 L415.0 823.6 L416.5 823.6 L418.0 823.6 L419.5 823.7 L421.0 823.7 L422.5 823.6 L424.0 823.6 L425.5 823.6 L427.0 823.6 L428.5 823.6 L430.0 823.6 L431.5 823.6 L433.0 823.6 L434.5 823.6 L436.0 823.6 L437.5 823.6 L439.0 823.6 L440.5 823.6 L442.0 823.6 L443.5 823.6 L445.0 823.6 L446.5 823.6 L448.0 823.6 L449.5 823.6 L451.0 823.7 L452.5 823.6 L454.0 823.6 L455.5 823.6 L457.0 823.6 L458.5 823.6 L460.0 823.6 L461.5 823.6 L463.0 823.6 L464.5 823.6 L466.0 823.6 L467.5 823.6 L469.0 823.6 L470.5 823.6 L472.0 823.6 L473.5 823.6 L475.0 823.6 L476.5 823.6 L478.0 823.6 L479.5 823.6 L481.0 823.6 L482.5 823.6 L484.0 823.6 L485.5 823.6 L487.0 823.6 L488.5 823.6 L490.0 823.6 L491.5 823.7 L493.0 823.6 L494.5 823.6 L496.0 823.6 L497.5 823.6 L499.0 823.6 L500.5 823.6 L502.0 823.6 L503.5 823.6 L505.0 823.6 L506.5 823.6 L508.0 823.6 L509.5 823.6 L511.0 823.6 L512.5 823.6 L514.0 823.6 L515.5 823.6 L517.0 823.6 L518.5 823.6 L520.0 823.6 L521.5 823.6 L523.0 823.6 L524.5 823.6 L526.0 823.6 L527.5 823.6 L529.0 823.6 L530.5 823.7 L532.0 823.6 L533.5 823.6 L535.0 823.7 L536.5 823.6 L538.0 823.6 L539.5 823.6 L541.0 823.6 L542.5 823.6 L544.0 823.6 L545.5 823.6 L547.0 823.6 L548.5 823.6 L550.0 823.6 L551.5 823.6 L553.0 823.6 L554.5 823.6 L556.0 823.6 L557.5 823.6 L559.0 823.6 L560.5 823.6 L562.0 823.6 L563.5 823.6 L565.0 823.6 L566.5 823.6 L568.0 823.6 L569.5 823.6 L571.0 823.6 L572.5 823.6 L574.0 823.6 L575.5 823.6 L577.0 823.6 L578.5 823.6 L580.0 823.6 L581.5 823.6 L583.0 823.6 L584.5 823.6 L586.0 823.6 L587.5 823.6 L589.0 823.6 L590.5 823.6 L592.0 823.7 L593.5 823.6 L595.0 823.7 L596.5 823.6 L598.0 823.6 L599.5 823.6 L601.0 823.6 L602.5 823.6 L604.0 823.6 L605.5 823.6 L607.0 823.6 L608.5 823.6 L610.0 823.6 L611.5 823.6 L613.0 823.6 L614.5 823.6 L616.0 823.6 L617.5 823.6 L619.0 823.6 L620.5 823.6 L622.0 823.6 L623.5 823.6 L625.0 823.6 L626.5 823.6 L628.0 823.6 L629.5 823.7 L631.0 823.6 L632.5 823.6 L634.0 823.7 L635.5 823.6 L637.0 823.6 L638.5 823.6 L640.0 823.7 L641.5 823.6 L643.0 823.6 L644.5 823.6 L646.0 823.7 L647.5 823.6 L649.0 823.7 L650.5 823.6 L652.0 823.6 L653.5 823.6 L655.0 823.6 L656.5 823.6 L658.0 823.6 L659.5 823.6 L661.0 823.6 L662.5 823.6 L664.0 823.6 L665.5 823.6 L667.0 823.7 L668.5 823.7 L670.0 823.6 L671.5 823.6 L673.0 823.7 L674.5 823.6 L676.0 823.6 L677.5 823.6 L679.0 823.7 L680.5 823.6 L682.0 823.7 L683.5 823.6 L685.0 823.6 L686.5 823.6 L688.0 823.6 L689.5 823.6 L691.0 823.6 L692.5 823.6 L694.0 823.6 L695.5 823.6 L697.0 823.6 L698.5 823.6 L700.0 823.7 L701.5 823.6 L703.0 823.6 L704.5 823.6 L706.0 823.5 L707.5 823.6 L709.0 823.5 L710.5 823.6 L712.0 823.5 L713.5 823.5 L715.0 823.5 L716.5 823.5 L718.0 823.4 L719.5 823.4 L721.0 823.5 L722.5 823.4 L724.0 823.3 L725.5 823.4 L727.0 823.3 L728.5 823.4 L730.0 823.3 L731.5 823.3 L733.0 823.3 L734.5 823.3 L736.0 823.3 L737.5 823.2 L739.0 823.3 L740.5 823.2 L742.0 823.2 L743.5 823.2 L745.0 823.2 L746.5 823.2 L748.0 823.3 L749.5 823.2 L751.0 823.2 L752.5 823.1 L754.0 823.2 L755.5 823.2 L757.0 823.2 L758.5 823.1 L760.0 823.1 L761.5 823.1 L763.0 823.1 L764.5 823.1 L766.0 823.1 L767.5 823.1 L769.0 823.1 L770.5 823.1 L772.0 823.1 L773.5 823.0 L775.0 822.9 L776.5 823.0 L778.0 823.1 L779.5 822.9 L781.0 823.0 L782.5 823.0 L784.0 823.1 L785.5 823.0 L787.0 823.0 L788.5 823.0 L790.0 823.0 L791.5 822.9 L793.0 823.0 L794.5 823.0 L796.0 823.0 L797.5 822.9 L799.0 823.0 L800.5 823.0 L802.0 822.9 L803.5 822.9 L805.0 822.8 L806.5 822.8 L808.0 822.8 L809.5 822.8 L811.0 822.8 L812.5 822.7 L814.0 822.8 L815.5 822.8 L817.0 822.7 L818.5 822.9 L820.0 822.7 L821.5 822.7 L823.0 822.9 L824.5 822.7 L826.0 822.6 L827.5 822.7 L829.0 822.6 L830.5 822.6 L832.0 822.7 L833.5 822.6 L835.0 822.5 L836.5 822.3 L838.0 822.3 L839.5 822.2 L841.0 822.2 L842.5 822.1 L844.0 822.1 L845.5 822.0 L847.0 822.1 L848.5 822.1 L850.0 821.9 L851.5 821.6 L853.0 821.6 L854.5 821.0 L856.0 821.0 L857.5 820.7 L859.0 820.5 L860.5 820.3 L862.0 820.3 L863.5 820.5 L865.0 819.7 L866.5 819.6 L868.0 819.6 L869.5 819.4 L871.0 819.2 L872.5 819.6 L874.0 818.9 L875.5 819.3 L877.0 819.4 L878.5 819.1 L880.0 818.5 L881.5 819.0 L883.0 818.3 L884.5 818.0 L886.0 818.4 L887.5 818.5 L889.0 818.3 L890.5 818.0 L892.0 817.8 L893.5 818.0 L895.0 817.9 L896.5 818.6 L898.0 818.5 L899.5 818.3 L901.0 817.7 L902.5 818.2 L904.0 817.8 L905.5 818.5 L907.0 818.4 L908.5 818.1 L910.0 817.6 L911.5 817.5 L913.0 817.5 L914.5 818.0 L916.0 817.7 L917.5 817.8 L919.0 817.8 L920.5 818.3 L922.0 817.4 L923.5 818.3 L925.0 817.4 L926.5 817.5 L928.0 818.7 L929.5 818.2 L931.0 817.8 L932.5 817.7 L934.0 818.4 L935.5 818.6 L937.0 818.7 L938.5 818.0 L940.0 818.8 L941.5 818.5 L943.0 819.0 L944.5 818.6 L946.0 818.2 L947.5 819.1 L949.0 818.5 L950.5 818.9 L952.0 818.5 L953.5 818.8 L955.0 819.3 L956.5 818.7 L958.0 819.1 L959.5 819.6 L961.0 819.7 L962.5 819.3 L964.0 819.4 L965.5 819.6 L967.0 819.8 L968.5 819.6 L970.0 819.7 L971.5 819.2 L973.0 820.0 L974.5 819.4 L976.0 819.3 L977.5 820.0 L979.0 819.3 L980.5 819.5 L982.0 819.4 L983.5 819.9 L985.0 819.9 L986.5 820.0 L988.0 819.6 L989.5 820.0 L991.0 820.3 L992.5 820.3 L994.0 820.5 L995.5 820.8 L997.0 820.8 L998.5 820.4 L1000.0 820.8 L1001.5 820.5 L1003.0 821.0 L1004.5 821.1 L1006.0 821.0 L1007.5 821.2 L1009.0 821.1 L1010.5 820.8 L1012.0 820.8 L1013.5 820.9 L1015.0 821.0 L1016.5 820.9 L1018.0 820.9 L1019.5 821.1 L1021.0 821.0 L1022.5 821.4 L1024.0 821.1 L1025.5 821.2 L1027.0 821.1 L1028.5 821.2 L1030.0 821.5 L1031.5 821.7 L1033.0 821.3 L1034.5 821.7 L1036.0 821.6 L1037.5 821.7 L1039.0 821.8 L1040.5 821.6 L1042.0 821.6 L1043.5 822.1 L1045.0 822.2 L1046.5 822.5 L1048.0 822.7 L1049.5 822.9 L1051.0 823.1 L1052.5 823.2 L1054.0 823.2 L1055.5 823.2 L1057.0 823.3 L1058.5 823.4 L1060.0 823.3 L1061.5 823.3 L1063.0 823.4 L1064.5 823.4 L1066.0 823.4 L1067.5 823.4 L1069.0 823.4 L1070.5 823.4 L1072.0 823.4 L1073.5 823.4 L1075.0 823.4 L1076.5 823.3 L1078.0 823.3 L1079.5 823.4 L1081.0 823.4 L1082.5 823.4 L1084.0 823.4 L1085.5 823.4 L1087.0 823.4 L1088.5 823.4 L1090.0 823.3 L1091.5 823.4 L1093.0 823.4 L1094.5 823.4 L1096.0 823.3 L1097.5 823.4 L1099.0 823.4 L1100.5 823.4 L1102.0 823.4 L1103.5 823.4 L1105.0 823.3 L1106.5 823.3 L1108.0 823.3 L1109.5 823.4 L1111.0 823.4 L1112.5 823.4 L1114.0 823.3 L1115.5 823.4 L1117.0 823.4 L1118.5 823.4 L1120.0 823.4 L1121.5 823.3 L1123.0 823.3 L1124.5 823.3 L1126.0 823.3 L1127.5 823.4 L1129.0 823.4 L1130.5 823.4 L1132.0 823.4 L1133.5 823.4 L1135.0 823.3 L1136.5 823.4 L1138.0 823.4 L1139.5 823.4 L1141.0 823.4 L1142.5 823.3 L1144.0 823.3 L1145.5 823.1 L1147.0 823.2 L1148.5 823.0 L1150.0 823.0 L1151.5 822.8 L1153.0 822.6 L1154.5 822.3 L1156.0 821.9 L1157.5 821.7 L1159.0 821.7 L1160.5 821.5 L1162.0 821.0 L1163.5 820.7 L1165.0 820.6 L1166.5 820.3 L1168.0 819.7 L1169.5 819.8 L1171.0 819.2 L1172.5 818.7 L1174.0 817.7 L1175.5 817.7 L1177.0 817.0 L1178.5 817.2 L1180.0 817.3 L1181.5 817.3 L1183.0 816.2 L1184.5 816.5 L1186.0 817.1 L1187.5 817.4 L1189.0 816.7 L1190.5 816.4 L1192.0 816.7 L1193.5 816.9 L1195.0 816.2 L1196.5 815.9 L1198.0 817.0 L1199.5 817.4 L1201.0 817.0 L1202.5 816.9 L1204.0 816.6 L1205.5 817.3 L1207.0 816.5 L1208.5 816.5 L1210.0 816.2 L1211.5 816.2 L1213.0 814.5 L1214.5 815.4 L1216.0 814.2 L1217.5 815.1 L1219.0 815.0 L1220.5 813.9 L1222.0 814.7 L1223.5 813.4 L1225.0 814.2 L1226.5 814.8 L1228.0 814.6 L1229.5 814.2 L1231.0 813.5 L1232.5 812.8 L1234.0 814.2 L1235.5 813.5 L1237.0 813.7 L1238.5 811.9 L1240.0 813.6 L1241.5 813.6 L1243.0 813.4 L1244.5 812.5 L1246.0 811.2 L1247.5 811.1 L1249.0 811.4 L1250.5 810.6 L1252.0 810.6 L1253.5 812.0 L1255.0 812.2 L1256.5 810.3 L1258.0 810.6 L1259.5 812.4 L1261.0 810.7 L1262.5 811.3 L1264.0 811.2 L1265.5 811.3 L1267.0 811.8 L1268.5 812.3 L1270.0 811.8 L1271.5 811.7 L1273.0 810.4 L1274.5 812.6 L1276.0 810.7 L1277.5 812.7 L1279.0 812.5 L1280.5 811.6 L1282.0 811.8 L1283.5 812.9 L1285.0 814.0 L1286.5 813.2 L1288.0 813.6 L1289.5 812.7 L1291.0 814.3 L1292.5 814.1 L1294.0 813.2 L1295.5 815.0 L1297.0 814.4 L1298.5 813.8 L1300.0 814.0 L1301.5 815.5 L1303.0 815.7 L1304.5 815.8 L1306.0 814.5 L1307.5 815.9 L1309.0 815.2 L1310.5 815.2 L1312.0 816.3 L1313.5 816.5 L1315.0 815.7 L1316.5 816.5 L1318.0 817.6 L1319.5 817.5 L1321.0 818.6 L1322.5 819.2 L1324.0 819.9 L1325.5 819.8 L1327.0 820.3 L1328.5 821.0 L1330.0 821.4 L1331.5 822.2 L1333.0 822.3 L1334.5 822.4 L1336.0 822.4 L1337.5 822.6 L1339.0 822.9 L1340.5 823.0 L1342.0 822.9 L1343.5 822.9 L1345.0 822.7 L1346.5 822.8 L1348.0 822.6 L1349.5 822.6 L1351.0 822.5 L1352.5 822.4 L1354.0 822.6 L1355.5 822.9 L1357.0 823.0 L1358.5 823.2 L1360.0 823.4 L1361.5 823.5 L1363.0 823.4 L1364.5 823.4 L1366.0 823.4 L1367.5 823.5 L1369.0 823.5 L1370.5 823.4 L1372.0 823.4 L1373.5 823.4 L1375.0 823.4 L1376.5 823.4 L1378.0 823.4 L1379.5 823.5 L1381.0 823.5 L1382.5 823.4 L1384.0 823.4 L1385.5 823.4 L1387.0 823.5 L1388.5 823.4 L1390.0 823.4 L1391.5 823.4 L1393.0 823.4 L1394.5 823.4 L1396.0 823.4 L1397.5 823.5 L1399.0 823.4 L1400.5 823.5 L1402.0 823.4 L1403.5 823.5 L1405.0 823.4 L1406.5 823.1 L1408.0 822.7 L1409.5 822.2 L1411.0 822.6 L1412.5 823.1 L1414.0 822.8 L1415.5 822.1 L1417.0 822.4 L1418.5 823.0 L1420.0 823.4 L1421.5 823.4 L1423.0 823.4 L1424.5 823.4 L1426.0 823.3 L1427.5 823.4 L1429.0 823.4 L1430.5 823.3 L1432.0 823.3 L1433.5 823.3 L1435.0 823.4 L1436.5 823.4 L1438.0 823.4 L1439.5 823.4 L1441.0 823.3 L1442.5 823.4 L1444.0 823.3 L1445.5 823.4 L1447.0 823.3 L1448.5 823.4 L1450.0 823.4 L1451.5 823.3 L1453.0 823.3 L1454.5 823.4 L1456.0 823.3 L1457.5 823.3 L1459.0 823.4 L1460.5 823.4 L1462.0 823.4 L1463.5 823.4 L1465.0 823.4 L1466.5 823.3 L1468.0 823.3 L1469.5 823.3 L1471.0 823.4 L1472.5 823.3 L1474.0 823.3 L1475.5 823.3 L1477.0 823.3 L1478.5 823.3 L1480.0 823.2 L1481.5 823.2 L1483.0 823.3 L1484.5 823.3 L1486.0 823.2 L1487.5 823.2 L1489.0 823.2 L1490.5 823.3 L1492.0 823.2 L1493.5 823.1 L1495.0 823.1 L1496.5 823.2 L1498.0 823.1 L1499.5 823.0 L1501.0 823.1 L1502.5 823.0 L1504.0 823.0 L1505.5 823.0 L1507.0 822.9 L1508.5 822.8 L1510.0 823.0 L1511.5 823.0 L1513.0 822.8 L1514.5 822.9 L1516.0 823.0 L1517.5 822.7 L1519.0 822.8 L1520.5 822.7 L1522.0 822.8 L1523.5 822.6 L1525.0 822.7 L1526.5 822.7 L1528.0 822.7 L1529.5 822.5 L1531.0 822.4 L1532.5 822.3 L1534.0 822.5 L1535.5 822.3 L1537.0 822.3 L1538.5 822.2 L1540.0 822.3 L1541.5 822.2 L1543.0 822.1 L1544.5 821.9 L1546.0 822.2 L1547.5 822.1 L1549.0 821.9 L1550.5 821.8 L1552.0 822.1 L1553.5 822.1 L1555.0 821.7 L1556.5 821.7 L1558.0 821.8 L1559.5 822.0 L1561.0 821.7 L1562.5 821.9 L1564.0 821.8 L1565.5 822.0 L1567.0 822.0 L1568.5 822.3 L1570.0 822.1 L1571.5 822.4 L1573.0 822.4 L1574.5 822.3 L1576.0 822.2 L1577.5 822.4 L1579.0 822.3 L1580.5 822.2 L1582.0 822.1 L1583.5 822.0 L1585.0 822.1 L1586.5 822.0 L1588.0 821.7 L1589.5 821.5 L1591.0 821.9 L1592.5 821.8 L1594.0 821.7 L1595.5 822.1 L1597.0 821.8 L1598.5 822.2 L1600.0 822.1 L1601.5 822.1 L1603.0 822.2 L1604.5 822.3 L1606.0 822.3 L1607.5 822.2 L1609.0 822.1 L1610.5 822.0 L1612.0 822.0 L1613.5 821.9 L1615.0 822.0 L1616.5 821.7 L1618.0 821.7 L1619.5 821.7 L1621.0 821.5 L1622.5 821.6 L1624.0 821.8 L1625.5 822.0 L1627.0 821.9 L1628.5 822.1 L1630.0 822.1 L1631.5 822.1 L1633.0 822.3 L1634.5 822.2 L1636.0 822.2 L1637.5 822.3 L1639.0 822.0 L1640.5 822.2 L1642.0 821.9 L1643.5 821.9 L1645.0 821.9 L1646.5 822.1 L1648.0 821.9 L1649.5 821.9 L1651.0 821.6 L1652.5 822.0 L1654.0 821.7 L1655.5 821.6 L1657.0 821.8 L1658.5 821.7 L1660.0 822.0 L1661.5 821.7 L1663.0 821.9 L1664.5 821.7 L1666.0 821.8 L1667.5 822.1 L1669.0 821.9 L1670.5 821.8 L1672.0 822.2 L1672.0 825.8 L1670.5 826.2 L1669.0 826.1 L1667.5 825.9 L1666.0 826.2 L1664.5 826.3 L1663.0 826.1 L1661.5 826.3 L1660.0 826.0 L1658.5 826.3 L1657.0 826.2 L1655.5 826.4 L1654.0 826.3 L1652.5 826.0 L1651.0 826.4 L1649.5 826.1 L1648.0 826.1 L1646.5 825.9 L1645.0 826.1 L1643.5 826.1 L1642.0 826.1 L1640.5 825.8 L1639.0 826.0 L1637.5 825.7 L1636.0 825.8 L1634.5 825.8 L1633.0 825.7 L1631.5 825.9 L1630.0 825.9 L1628.5 825.9 L1627.0 826.1 L1625.5 826.0 L1624.0 826.2 L1622.5 826.4 L1621.0 826.5 L1619.5 826.3 L1618.0 826.3 L1616.5 826.3 L1615.0 826.0 L1613.5 826.1 L1612.0 826.0 L1610.5 826.0 L1609.0 825.9 L1607.5 825.8 L1606.0 825.7 L1604.5 825.7 L1603.0 825.8 L1601.5 825.9 L1600.0 825.9 L1598.5 825.8 L1597.0 826.2 L1595.5 825.9 L1594.0 826.3 L1592.5 826.2 L1591.0 826.1 L1589.5 826.5 L1588.0 826.3 L1586.5 826.0 L1585.0 825.9 L1583.5 826.0 L1582.0 825.9 L1580.5 825.8 L1579.0 825.7 L1577.5 825.6 L1576.0 825.8 L1574.5 825.7 L1573.0 825.6 L1571.5 825.6 L1570.0 825.9 L1568.5 825.7 L1567.0 826.0 L1565.5 826.0 L1564.0 826.2 L1562.5 826.1 L1561.0 826.3 L1559.5 826.0 L1558.0 826.2 L1556.5 826.3 L1555.0 826.3 L1553.5 825.9 L1552.0 825.9 L1550.5 826.2 L1549.0 826.1 L1547.5 825.9 L1546.0 825.8 L1544.5 826.1 L1543.0 825.9 L1541.5 825.8 L1540.0 825.7 L1538.5 825.8 L1537.0 825.7 L1535.5 825.7 L1534.0 825.5 L1532.5 825.7 L1531.0 825.6 L1529.5 825.5 L1528.0 825.3 L1526.5 825.3 L1525.0 825.3 L1523.5 825.4 L1522.0 825.2 L1520.5 825.3 L1519.0 825.2 L1517.5 825.3 L1516.0 825.0 L1514.5 825.1 L1513.0 825.2 L1511.5 825.0 L1510.0 825.0 L1508.5 825.2 L1507.0 825.1 L1505.5 825.0 L1504.0 825.0 L1502.5 825.0 L1501.0 824.9 L1499.5 825.0 L1498.0 824.9 L1496.5 824.8 L1495.0 824.9 L1493.5 824.9 L1492.0 824.8 L1490.5 824.7 L1489.0 824.8 L1487.5 824.8 L1486.0 824.8 L1484.5 824.7 L1483.0 824.7 L1481.5 824.8 L1480.0 824.8 L1478.5 824.7 L1477.0 824.7 L1475.5 824.7 L1474.0 824.7 L1472.5 824.7 L1471.0 824.6 L1469.5 824.7 L1468.0 824.7 L1466.5 824.7 L1465.0 824.6 L1463.5 824.6 L1462.0 824.6 L1460.5 824.6 L1459.0 824.6 L1457.5 824.7 L1456.0 824.7 L1454.5 824.6 L1453.0 824.7 L1451.5 824.7 L1450.0 824.6 L1448.5 824.6 L1447.0 824.7 L1445.5 824.6 L1444.0 824.7 L1442.5 824.6 L1441.0 824.7 L1439.5 824.6 L1438.0 824.6 L1436.5 824.6 L1435.0 824.6 L1433.5 824.7 L1432.0 824.7 L1430.5 824.7 L1429.0 824.6 L1427.5 824.6 L1426.0 824.7 L1424.5 824.6 L1423.0 824.6 L1421.5 824.6 L1420.0 824.6 L1418.5 825.0 L1417.0 825.6 L1415.5 825.9 L1414.0 825.2 L1412.5 824.9 L1411.0 825.4 L1409.5 825.8 L1408.0 825.3 L1406.5 824.9 L1405.0 824.6 L1403.5 824.5 L1402.0 824.6 L1400.5 824.5 L1399.0 824.6 L1397.5 824.5 L1396.0 824.6 L1394.5 824.6 L1393.0 824.6 L1391.5 824.6 L1390.0 824.6 L1388.5 824.6 L1387.0 824.5 L1385.5 824.6 L1384.0 824.6 L1382.5 824.6 L1381.0 824.5 L1379.5 824.5 L1378.0 824.6 L1376.5 824.6 L1375.0 824.6 L1373.5 824.6 L1372.0 824.6 L1370.5 824.6 L1369.0 824.5 L1367.5 824.5 L1366.0 824.6 L1364.5 824.6 L1363.0 824.6 L1361.5 824.5 L1360.0 824.6 L1358.5 824.8 L1357.0 825.0 L1355.5 825.1 L1354.0 825.4 L1352.5 825.6 L1351.0 825.5 L1349.5 825.4 L1348.0 825.4 L1346.5 825.2 L1345.0 825.3 L1343.5 825.1 L1342.0 825.1 L1340.5 825.0 L1339.0 825.1 L1337.5 825.4 L1336.0 825.6 L1334.5 825.6 L1333.0 825.7 L1331.5 825.8 L1330.0 826.6 L1328.5 827.0 L1327.0 827.7 L1325.5 828.2 L1324.0 828.1 L1322.5 828.8 L1321.0 829.4 L1319.5 830.5 L1318.0 830.4 L1316.5 831.5 L1315.0 832.3 L1313.5 831.5 L1312.0 831.7 L1310.5 832.8 L1309.0 832.8 L1307.5 832.1 L1306.0 833.5 L1304.5 832.2 L1303.0 832.3 L1301.5 832.5 L1300.0 834.0 L1298.5 834.2 L1297.0 833.6 L1295.5 833.0 L1294.0 834.8 L1292.5 833.9 L1291.0 833.7 L1289.5 835.3 L1288.0 834.4 L1286.5 834.8 L1285.0 834.0 L1283.5 835.1 L1282.0 836.2 L1280.5 836.4 L1279.0 835.5 L1277.5 835.3 L1276.0 837.3 L1274.5 835.4 L1273.0 837.6 L1271.5 836.3 L1270.0 836.2 L1268.5 835.7 L1267.0 836.2 L1265.5 836.7 L1264.0 836.8 L1262.5 836.7 L1261.0 837.3 L1259.5 835.6 L1258.0 837.4 L1256.5 837.7 L1255.0 835.8 L1253.5 836.0 L1252.0 837.4 L1250.5 837.4 L1249.0 836.6 L1247.5 836.9 L1246.0 836.8 L1244.5 835.5 L1243.0 834.6 L1241.5 834.4 L1240.0 834.4 L1238.5 836.1 L1237.0 834.3 L1235.5 834.5 L1234.0 833.8 L1232.5 835.2 L1231.0 834.5 L1229.5 833.8 L1228.0 833.4 L1226.5 833.2 L1225.0 833.8 L1223.5 834.6 L1222.0 833.3 L1220.5 834.1 L1219.0 833.0 L1217.5 832.9 L1216.0 833.8 L1214.5 832.6 L1213.0 833.5 L1211.5 831.8 L1210.0 831.8 L1208.5 831.5 L1207.0 831.5 L1205.5 830.7 L1204.0 831.4 L1202.5 831.1 L1201.0 831.0 L1199.5 830.6 L1198.0 831.0 L1196.5 832.1 L1195.0 831.8 L1193.5 831.1 L1192.0 831.3 L1190.5 831.6 L1189.0 831.3 L1187.5 830.6 L1186.0 830.9 L1184.5 831.5 L1183.0 831.8 L1181.5 830.7 L1180.0 830.7 L1178.5 830.8 L1177.0 831.0 L1175.5 830.3 L1174.0 830.3 L1172.5 829.3 L1171.0 828.8 L1169.5 828.2 L1168.0 828.3 L1166.5 827.7 L1165.0 827.4 L1163.5 827.3 L1162.0 827.0 L1160.5 826.5 L1159.0 826.3 L1157.5 826.3 L1156.0 826.1 L1154.5 825.7 L1153.0 825.4 L1151.5 825.2 L1150.0 825.0 L1148.5 825.0 L1147.0 824.8 L1145.5 824.9 L1144.0 824.7 L1142.5 824.7 L1141.0 824.6 L1139.5 824.6 L1138.0 824.6 L1136.5 824.6 L1135.0 824.7 L1133.5 824.6 L1132.0 824.6 L1130.5 824.6 L1129.0 824.6 L1127.5 824.6 L1126.0 824.7 L1124.5 824.7 L1123.0 824.7 L1121.5 824.7 L1120.0 824.6 L1118.5 824.6 L1117.0 824.6 L1115.5 824.6 L1114.0 824.7 L1112.5 824.6 L1111.0 824.6 L1109.5 824.6 L1108.0 824.7 L1106.5 824.7 L1105.0 824.7 L1103.5 824.6 L1102.0 824.6 L1100.5 824.6 L1099.0 824.6 L1097.5 824.6 L1096.0 824.7 L1094.5 824.6 L1093.0 824.6 L1091.5 824.6 L1090.0 824.7 L1088.5 824.6 L1087.0 824.6 L1085.5 824.6 L1084.0 824.6 L1082.5 824.6 L1081.0 824.6 L1079.5 824.6 L1078.0 824.7 L1076.5 824.7 L1075.0 824.6 L1073.5 824.6 L1072.0 824.6 L1070.5 824.6 L1069.0 824.6 L1067.5 824.6 L1066.0 824.6 L1064.5 824.6 L1063.0 824.6 L1061.5 824.7 L1060.0 824.7 L1058.5 824.6 L1057.0 824.7 L1055.5 824.8 L1054.0 824.8 L1052.5 824.8 L1051.0 824.9 L1049.5 825.1 L1048.0 825.3 L1046.5 825.5 L1045.0 825.8 L1043.5 825.9 L1042.0 826.4 L1040.5 826.4 L1039.0 826.2 L1037.5 826.3 L1036.0 826.4 L1034.5 826.3 L1033.0 826.7 L1031.5 826.3 L1030.0 826.5 L1028.5 826.8 L1027.0 826.9 L1025.5 826.8 L1024.0 826.9 L1022.5 826.6 L1021.0 827.0 L1019.5 826.9 L1018.0 827.1 L1016.5 827.1 L1015.0 827.0 L1013.5 827.1 L1012.0 827.2 L1010.5 827.2 L1009.0 826.9 L1007.5 826.8 L1006.0 827.0 L1004.5 826.9 L1003.0 827.0 L1001.5 827.5 L1000.0 827.2 L998.5 827.6 L997.0 827.2 L995.5 827.2 L994.0 827.5 L992.5 827.7 L991.0 827.7 L989.5 828.0 L988.0 828.4 L986.5 828.0 L985.0 828.1 L983.5 828.1 L982.0 828.6 L980.5 828.5 L979.0 828.7 L977.5 828.0 L976.0 828.7 L974.5 828.6 L973.0 828.0 L971.5 828.8 L970.0 828.3 L968.5 828.4 L967.0 828.2 L965.5 828.4 L964.0 828.6 L962.5 828.7 L961.0 828.3 L959.5 828.4 L958.0 828.9 L956.5 829.3 L955.0 828.7 L953.5 829.2 L952.0 829.5 L950.5 829.1 L949.0 829.5 L947.5 828.9 L946.0 829.8 L944.5 829.4 L943.0 829.0 L941.5 829.5 L940.0 829.2 L938.5 830.0 L937.0 829.3 L935.5 829.4 L934.0 829.6 L932.5 830.3 L931.0 830.2 L929.5 829.8 L928.0 829.3 L926.5 830.5 L925.0 830.6 L923.5 829.7 L922.0 830.6 L920.5 829.7 L919.0 830.2 L917.5 830.2 L916.0 830.3 L914.5 830.0 L913.0 830.5 L911.5 830.5 L910.0 830.4 L908.5 829.9 L907.0 829.6 L905.5 829.5 L904.0 830.2 L902.5 829.8 L901.0 830.3 L899.5 829.7 L898.0 829.5 L896.5 829.4 L895.0 830.1 L893.5 830.0 L892.0 830.2 L890.5 830.0 L889.0 829.7 L887.5 829.5 L886.0 829.6 L884.5 830.0 L883.0 829.7 L881.5 829.0 L880.0 829.5 L878.5 828.9 L877.0 828.6 L875.5 828.7 L874.0 829.1 L872.5 828.4 L871.0 828.8 L869.5 828.6 L868.0 828.4 L866.5 828.4 L865.0 828.3 L863.5 827.5 L862.0 827.7 L860.5 827.7 L859.0 827.5 L857.5 827.3 L856.0 827.0 L854.5 827.0 L853.0 826.4 L851.5 826.4 L850.0 826.1 L848.5 825.9 L847.0 825.9 L845.5 826.0 L844.0 825.9 L842.5 825.9 L841.0 825.8 L839.5 825.8 L838.0 825.7 L836.5 825.7 L835.0 825.5 L833.5 825.4 L832.0 825.3 L830.5 825.4 L829.0 825.4 L827.5 825.3 L826.0 825.4 L824.5 825.3 L823.0 825.1 L821.5 825.3 L820.0 825.3 L818.5 825.1 L817.0 825.3 L815.5 825.2 L814.0 825.2 L812.5 825.3 L811.0 825.2 L809.5 825.2 L808.0 825.2 L806.5 825.2 L805.0 825.2 L803.5 825.1 L802.0 825.1 L800.5 825.0 L799.0 825.0 L797.5 825.1 L796.0 825.0 L794.5 825.0 L793.0 825.0 L791.5 825.1 L790.0 825.0 L788.5 825.0 L787.0 825.0 L785.5 825.0 L784.0 824.9 L782.5 825.0 L781.0 825.0 L779.5 825.1 L778.0 824.9 L776.5 825.0 L775.0 825.1 L773.5 825.0 L772.0 824.9 L770.5 824.9 L769.0 824.9 L767.5 824.9 L766.0 824.9 L764.5 824.9 L763.0 824.9 L761.5 824.9 L760.0 824.9 L758.5 824.9 L757.0 824.8 L755.5 824.8 L754.0 824.8 L752.5 824.9 L751.0 824.8 L749.5 824.8 L748.0 824.7 L746.5 824.8 L745.0 824.8 L743.5 824.8 L742.0 824.8 L740.5 824.8 L739.0 824.7 L737.5 824.8 L736.0 824.7 L734.5 824.7 L733.0 824.7 L731.5 824.7 L730.0 824.7 L728.5 824.6 L727.0 824.7 L725.5 824.6 L724.0 824.7 L722.5 824.6 L721.0 824.5 L719.5 824.6 L718.0 824.6 L716.5 824.5 L715.0 824.5 L713.5 824.5 L712.0 824.5 L710.5 824.4 L709.0 824.5 L707.5 824.4 L706.0 824.5 L704.5 824.4 L703.0 824.4 L701.5 824.4 L700.0 824.3 L698.5 824.4 L697.0 824.4 L695.5 824.4 L694.0 824.4 L692.5 824.4 L691.0 824.4 L689.5 824.4 L688.0 824.4 L686.5 824.4 L685.0 824.4 L683.5 824.4 L682.0 824.3 L680.5 824.4 L679.0 824.3 L677.5 824.4 L676.0 824.4 L674.5 824.4 L673.0 824.3 L671.5 824.4 L670.0 824.4 L668.5 824.3 L667.0 824.3 L665.5 824.4 L664.0 824.4 L662.5 824.4 L661.0 824.4 L659.5 824.4 L658.0 824.4 L656.5 824.4 L655.0 824.4 L653.5 824.4 L652.0 824.4 L650.5 824.4 L649.0 824.3 L647.5 824.4 L646.0 824.3 L644.5 824.4 L643.0 824.4 L641.5 824.4 L640.0 824.3 L638.5 824.4 L637.0 824.4 L635.5 824.4 L634.0 824.3 L632.5 824.4 L631.0 824.4 L629.5 824.3 L628.0 824.4 L626.5 824.4 L625.0 824.4 L623.5 824.4 L622.0 824.4 L620.5 824.4 L619.0 824.4 L617.5 824.4 L616.0 824.4 L614.5 824.4 L613.0 824.4 L611.5 824.4 L610.0 824.4 L608.5 824.4 L607.0 824.4 L605.5 824.4 L604.0 824.4 L602.5 824.4 L601.0 824.4 L599.5 824.4 L598.0 824.4 L596.5 824.4 L595.0 824.3 L593.5 824.4 L592.0 824.3 L590.5 824.4 L589.0 824.4 L587.5 824.4 L586.0 824.4 L584.5 824.4 L583.0 824.4 L581.5 824.4 L580.0 824.4 L578.5 824.4 L577.0 824.4 L575.5 824.4 L574.0 824.4 L572.5 824.4 L571.0 824.4 L569.5 824.4 L568.0 824.4 L566.5 824.4 L565.0 824.4 L563.5 824.4 L562.0 824.4 L560.5 824.4 L559.0 824.4 L557.5 824.4 L556.0 824.4 L554.5 824.4 L553.0 824.4 L551.5 824.4 L550.0 824.4 L548.5 824.4 L547.0 824.4 L545.5 824.4 L544.0 824.4 L542.5 824.4 L541.0 824.4 L539.5 824.4 L538.0 824.4 L536.5 824.4 L535.0 824.3 L533.5 824.4 L532.0 824.4 L530.5 824.3 L529.0 824.4 L527.5 824.4 L526.0 824.4 L524.5 824.4 L523.0 824.4 L521.5 824.4 L520.0 824.4 L518.5 824.4 L517.0 824.4 L515.5 824.4 L514.0 824.4 L512.5 824.4 L511.0 824.4 L509.5 824.4 L508.0 824.4 L506.5 824.4 L505.0 824.4 L503.5 824.4 L502.0 824.4 L500.5 824.4 L499.0 824.4 L497.5 824.4 L496.0 824.4 L494.5 824.4 L493.0 824.4 L491.5 824.3 L490.0 824.4 L488.5 824.4 L487.0 824.4 L485.5 824.4 L484.0 824.4 L482.5 824.4 L481.0 824.4 L479.5 824.4 L478.0 824.4 L476.5 824.4 L475.0 824.4 L473.5 824.4 L472.0 824.4 L470.5 824.4 L469.0 824.4 L467.5 824.4 L466.0 824.4 L464.5 824.4 L463.0 824.4 L461.5 824.4 L460.0 824.4 L458.5 824.4 L457.0 824.4 L455.5 824.4 L454.0 824.4 L452.5 824.4 L451.0 824.3 L449.5 824.4 L448.0 824.4 L446.5 824.4 L445.0 824.4 L443.5 824.4 L442.0 824.4 L440.5 824.4 L439.0 824.4 L437.5 824.4 L436.0 824.4 L434.5 824.4 L433.0 824.4 L431.5 824.4 L430.0 824.4 L428.5 824.4 L427.0 824.4 L425.5 824.4 L424.0 824.4 L422.5 824.4 L421.0 824.3 L419.5 824.3 L418.0 824.4 L416.5 824.4 L415.0 824.4 L413.5 824.4 L412.0 824.4 L410.5 824.4 L409.0 824.4 L407.5 824.4 L406.0 824.4 L404.5 824.4 L403.0 824.4 L401.5 824.4 L400.0 824.4 L398.5 824.4 L397.0 824.4 L395.5 824.4 L394.0 824.4 L392.5 824.4 L391.0 824.4 L389.5 824.4 L388.0 824.4 L386.5 824.3 L385.0 824.4 L383.5 824.4 L382.0 824.5 L380.5 824.8 L379.0 824.8 L377.5 824.7 L376.0 824.5 L374.5 824.4 L373.0 824.4 L371.5 824.3 L370.0 824.3 L368.5 824.4 L367.0 824.4 L365.5 824.4 L364.0 824.4 L362.5 824.4 L361.0 824.4 L359.5 824.4 L358.0 824.4 L356.5 824.4 L355.0 824.4 L353.5 824.4 L352.0 824.3 L350.5 824.4 L349.0 824.3 L347.5 824.4 L346.0 824.3 L344.5 824.3 L343.0 824.4 L341.5 824.4 L340.0 824.4 L338.5 824.3 L337.0 824.3 L335.5 824.4 L334.0 824.4 L332.5 824.4 L331.0 824.5 L329.5 824.5 L328.0 824.6 L326.5 824.6 L325.0 824.7 L323.5 824.6 L322.0 824.7 L320.5 824.8 L319.0 824.9 L317.5 825.1 L316.0 825.3 L314.5 825.3 L313.0 825.4 L311.5 825.5 L310.0 825.5 L308.5 825.7 L307.0 825.9 L305.5 826.0 L304.0 826.0 L302.5 826.1 L301.0 826.2 L299.5 826.2 L298.0 826.6 L296.5 826.6 L295.0 826.4 L293.5 826.4 L292.0 826.3 L290.5 826.6 L289.0 826.6 L287.5 826.7 L286.0 826.5 L284.5 826.5 L283.0 826.3 L281.5 826.7 L280.0 826.5 L278.5 826.4 L277.0 826.4 L275.5 826.7 L274.0 826.3 L272.5 826.4 L271.0 826.4 L269.5 826.6 L268.0 826.4 L266.5 826.7 L265.0 826.6 L263.5 826.6 L262.0 826.9 L260.5 827.0 L259.0 826.8 L257.5 826.8 L256.0 826.5 L254.5 826.8 L253.0 826.8 L251.5 827.0 L250.0 827.0 L248.5 826.8 L247.0 826.9 L245.5 826.9 L244.0 827.0 L242.5 826.8 L241.0 827.1 L239.5 826.9 L238.0 827.0 L236.5 827.0 L235.0 826.6 L233.5 826.8 L232.0 826.6 L230.5 827.0 L229.0 826.8 L227.5 826.6 L226.0 827.1 L224.5 826.7 L223.0 826.9 L221.5 827.0 L220.0 826.8 L218.5 826.8 L217.0 826.6 L215.5 826.8 L214.0 826.9 L212.5 826.6 L211.0 826.7 L209.5 826.7 L208.0 826.6 L206.5 826.6 L205.0 826.7 L203.5 826.5 L202.0 826.4 L200.5 826.4 L199.0 826.6 L197.5 826.5 L196.0 826.6 L194.5 826.5 L193.0 826.3 L191.5 826.6 L190.0 826.3 L188.5 826.2 L187.0 826.2 L185.5 826.2 L184.0 826.4 L182.5 826.0 L181.0 826.4 L179.5 826.1 L178.0 826.1 L176.5 826.1 L175.0 825.9 L173.5 825.7 L172.0 825.5 L170.5 825.7 L169.0 825.4 L167.5 825.3 L166.0 825.2 L164.5 825.2 L163.0 825.0 L161.5 825.1 L160.0 825.0 L158.5 825.0 L157.0 825.0 L155.5 824.8 L154.0 824.9 L152.5 824.8 L151.0 824.8 Z" fill="#1e90ff"/>
<rect x="151" y="823.400" width="1521" height="1.200" fill="#1e90ff" opacity="0.450"/>
<rect x="268.5" y="843" width="1500" height="37" rx="3.500" fill="none" stroke="#00adef" stroke-width="3"/>
</g>
<rect x="151" y="767" width="3" height="167" fill="url(#shL)"/>
<rect x="489.200" y="750" width="2.900" height="184" fill="#ff5c5c"/>
<path d="M479 734 H502 V753.500 L492.200 765 H489 L479 753.500 Z" fill="#ff5c5c"/>
<path d="M483.300 737.800 H497 M483.300 741.400 H497 M483.300 745 H497" stroke="#d93636" stroke-width="1.300" fill="none"/>
<g font-family="DejaVu Sans Mono, Liberation Mono, monospace" font-size="11" letter-spacing="0.280" clip-path="url(#clipS)">
<text x="134.8" y="761" fill="#fff" font-weight="bold">2790</text>
<text x="169.0" y="761" fill="#43474b">2791</text>
<text x="203.2" y="761" fill="#43474b">2792</text>
<text x="237.4" y="761" fill="#43474b">2793</text>
<text x="271.6" y="761" fill="#43474b">2794</text>
<text x="305.8" y="761" fill="#fff" font-weight="bold">2795</text>
<text x="340.0" y="761" fill="#43474b">2796</text>
<text x="374.2" y="761" fill="#43474b">2797</text>
<text x="408.4" y="761" fill="#43474b">2798</text>
<text x="442.6" y="761" fill="#43474b">2799</text>
<text x="476.8" y="761" fill="#fff" font-weight="bold">2800</text>
<text x="511.0" y="761" fill="#43474b">2801</text>
<text x="545.2" y="761" fill="#43474b">2802</text>
<text x="579.4" y="761" fill="#43474b">2803</text>
<text x="613.6" y="761" fill="#43474b">2804</text>
<text x="647.8" y="761" fill="#fff" font-weight="bold">2805</text>
<text x="682.0" y="761" fill="#43474b">2806</text>
<text x="716.2" y="761" fill="#43474b">2807</text>
<text x="750.4" y="761" fill="#43474b">2808</text>
<text x="784.6" y="761" fill="#43474b">2809</text>
<text x="818.8" y="761" fill="#fff" font-weight="bold">2810</text>
<text x="853.0" y="761" fill="#43474b">2811</text>
<text x="887.2" y="761" fill="#43474b">2812</text>
<text x="921.4" y="761" fill="#43474b">2813</text>
<text x="955.6" y="761" fill="#43474b">2814</text>
<text x="989.8" y="761" fill="#fff" font-weight="bold">2815</text>
<text x="1024.0" y="761" fill="#43474b">2816</text>
<text x="1058.2" y="761" fill="#43474b">2817</text>
<text x="1092.4" y="761" fill="#43474b">2818</text>
<text x="1126.6" y="761" fill="#43474b">2819</text>
<text x="1160.8" y="761" fill="#fff" font-weight="bold">2820</text>
<text x="1195.0" y="761" fill="#43474b">2821</text>
<text x="1229.2" y="761" fill="#43474b">2822</text>
<text x="1263.4" y="761" fill="#43474b">2823</text>
<text x="1297.6" y="761" fill="#43474b">2824</text>
<text x="1331.8" y="761" fill="#fff" font-weight="bold">2825</text>
<text x="1366.0" y="761" fill="#43474b">2826</text>
<text x="1400.2" y="761" fill="#43474b">2827</text>
<text x="1434.4" y="761" fill="#43474b">2828</text>
<text x="1468.6" y="761" fill="#43474b">2829</text>
<text x="1502.8" y="761" fill="#fff" font-weight="bold">2830</text>
<text x="1537.0" y="761" fill="#43474b">2831</text>
<text x="1571.2" y="761" fill="#43474b">2832</text>
<text x="1605.4" y="761" fill="#43474b">2833</text>
<text x="1639.6" y="761" fill="#43474b">2834</text>
<text x="1673.8" y="761" fill="#fff" font-weight="bold">2835</text>
</g>
<path d="M479 734 H502 V753.500 L492.200 765 H489 L479 753.500 Z" fill="#ff5c5c"/>
<path d="M483.300 737.800 H497 M483.300 741.400 H497 M483.300 745 H497" stroke="#d93636" stroke-width="1.300" fill="none"/>
</svg>
<div class="abs" id="tl-layers" style="left:7px;top:734px;width:144px;height:200px;background:#2a2e32"></div>
<svg style="left:0;top:734px" width="152" height="34" viewBox="0 734 152 34">
<g fill="#9a9a9a"><path d="M69 745.500 H89 V747.300 H69 Z"/><path d="M74 745.600 L74.800 742 H83.200 L84 745.600 H82.200 L81.800 743.800 H76.200 L75.800 745.600 Z"/><path d="M70.600 749 H87.400 L85.600 761.600 H72.400 Z"/></g>
<path d="M76.200 750.800 L76.900 759.800 M81.800 750.800 L81.100 759.800" stroke="#2a2e32" stroke-width="1.600" fill="none"/>
<rect x="98.600" y="742.700" width="15" height="18.600" rx="1.200" fill="#3d4043" stroke="#9a9a9a" stroke-width="1.900"/><circle cx="106.100" cy="752.500" r="2.400" fill="none" stroke="#9a9a9a" stroke-width="1.600"/>
<path d="M133 742.900 L142.400 752.300 L133 761.700 L123.600 752.300 Z" fill="#3d4043" stroke="#9a9a9a" stroke-width="1.900" stroke-linejoin="round"/>
</svg>
<div class="abs" style="left:7px;top:734px;width:144px;height:200px;overflow:hidden">
<div class="abs" style="left:4px;top:35.0px;width:136px;height:30.600px;border-radius:3px;background:#b9b9b9"></div>
<svg style="left:10px;top:41.0px" width="40" height="20" viewBox="0 0 40 20"><circle cx="8" cy="9.700" r="5.700" fill="none" stroke="#adadad" stroke-width="2.600"/><circle cx="8" cy="9.700" r="4.300" fill="none" stroke="#8d8d8d" stroke-width="1.800"/><rect x="19.300" y="2.400" width="13.700" height="14" rx="1" fill="#adadad" opacity="0.550"/><path d="M22.900 9 V6.400 Q22.900 3.800 25.200 3.800 H27.300 Q29.600 3.800 29.600 6.400 V9" fill="none" stroke="#c9c9c9" stroke-width="1.500"/><rect x="20.900" y="8.700" width="10.500" height="6.800" fill="#8d8d8d"/></svg>
<div class="abs" style="left:4px;top:72.9px;width:136px;height:30.600px;border-radius:3px;background:#b9b9b9"></div>
<svg style="left:10px;top:78.9px" width="40" height="20" viewBox="0 0 40 20"><circle cx="8" cy="9.700" r="5.700" fill="none" stroke="#adadad" stroke-width="2.600"/><circle cx="8" cy="9.700" r="4.300" fill="none" stroke="#8d8d8d" stroke-width="1.800"/><rect x="19.300" y="2.400" width="13.700" height="14" rx="1" fill="#adadad" opacity="0.550"/><path d="M22.900 9 V6.400 Q22.900 3.800 25.200 3.800 H27.300 Q29.600 3.800 29.600 6.400 V9" fill="none" stroke="#c9c9c9" stroke-width="1.500"/><rect x="20.900" y="8.700" width="10.500" height="6.800" fill="#8d8d8d"/></svg>
<div class="abs" style="left:4px;top:110.8px;width:136px;height:30.600px;border-radius:3px;background:#1ee29a"></div>
<svg style="left:10px;top:116.8px" width="40" height="20" viewBox="0 0 40 20"><circle cx="8" cy="9.700" r="5.700" fill="none" stroke="#1bc888" stroke-width="2.600"/><circle cx="8" cy="9.700" r="4.300" fill="none" stroke="#17a873" stroke-width="1.800"/><rect x="19.300" y="2.400" width="13.700" height="14" rx="1" fill="#1bc888" opacity="0.550"/><path d="M22.900 9 V6.400 Q22.900 3.800 25.200 3.800 H27.300 Q29.600 3.800 29.600 6.400 V9" fill="none" stroke="#4fe8b0" stroke-width="1.500"/><rect x="20.900" y="8.700" width="10.500" height="6.800" fill="#17a873"/></svg>
<div class="abs" style="left:4px;top:148.7px;width:136px;height:30.600px;border-radius:3px;background:#b9b9b9"></div>
<svg style="left:10px;top:154.7px" width="40" height="20" viewBox="0 0 40 20"><circle cx="8" cy="9.700" r="5.700" fill="none" stroke="#adadad" stroke-width="2.600"/><circle cx="8" cy="9.700" r="4.300" fill="none" stroke="#8d8d8d" stroke-width="1.800"/><rect x="19.300" y="2.400" width="13.700" height="14" rx="1" fill="#adadad" opacity="0.550"/><path d="M22.900 9 V6.400 Q22.900 3.800 25.200 3.800 H27.300 Q29.600 3.800 29.600 6.400 V9" fill="none" stroke="#c9c9c9" stroke-width="1.500"/><rect x="20.900" y="8.700" width="10.500" height="6.800" fill="#8d8d8d"/></svg>
<div class="abs" style="left:4px;top:186.6px;width:136px;height:30.600px;border-radius:3px;background:#b9b9b9"></div>
<svg style="left:10px;top:192.6px" width="40" height="20" viewBox="0 0 40 20"><circle cx="8" cy="9.700" r="5.700" fill="none" stroke="#adadad" stroke-width="2.600"/><circle cx="8" cy="9.700" r="4.300" fill="none" stroke="#8d8d8d" stroke-width="1.800"/><rect x="19.300" y="2.400" width="13.700" height="14" rx="1" fill="#adadad" opacity="0.550"/><path d="M22.900 9 V6.400 Q22.900 3.800 25.200 3.800 H27.300 Q29.600 3.800 29.600 6.400 V9" fill="none" stroke="#c9c9c9" stroke-width="1.500"/><rect x="20.900" y="8.700" width="10.500" height="6.800" fill="#8d8d8d"/></svg>
</div>
<svg style="left:0;top:934px" width="80" height="16" viewBox="0 934 80 16">
<rect x="11.800" y="937.600" width="22.800" height="8.600" rx="1" fill="#1a1a1a" stroke="#8a8a8a" stroke-width="1"/><rect x="12.600" y="938.400" width="13.600" height="7" fill="#454545"/><rect x="26.200" y="937.600" width="1.200" height="8.600" fill="#8a8a8a"/><path d="M14 942 L16.600 943.500 L14 945 Z M30.200 942 L32.800 943.500 L30.200 945 Z" fill="#bdbdbd"/>
<path d="M47.200 946 L50.500 941.400 L52.600 944 L55 939.800 L57 943 L59.600 937.600 L64 946 Z" fill="#3c3c3c" stroke="#b5b5b5" stroke-width="1" stroke-linejoin="round"/>
</svg>
<!-- ===== text labels ===== -->
<div class="t" id="t-support" style="left:73.4px;top:13.2px;font-size:14.77px;color:#fff;transform:scaleX(1.0044);transform-origin:0 0">support us</div>
<div class="t" id="t-title" style="left:877.0px;top:13.5px;font-size:16.43px;color:#fff;transform:scaleX(0.9954);transform-origin:0 0">My Project</div>
<div class="t" id="t-new" style="left:1686.4px;top:13.2px;font-size:14.77px;color:#fff;transform:scaleX(1.0346);transform-origin:0 0">new</div>
<div class="t" id="t-open" style="left:1728.6px;top:13.2px;font-size:14.77px;color:#fff;transform:scaleX(1.0095);transform-origin:0 0">open</div>
<div class="t" id="t-export" style="left:1775.6px;top:13.2px;font-size:14.77px;color:#fff;transform:scaleX(1.0296);transform-origin:0 0">export</div>
<div class="t" id="t-save" style="left:1835.8px;top:13.2px;font-size:14.77px;color:#1ee29a;transform:scaleX(0.9667);transform-origin:0 0">save</div>
<div class="t" id="t-inspector" style="left:1700.5px;top:44.6px;font-size:20.8px;color:#fff;transform:scaleX(0.9646);transform-origin:0 0">Inspector</div>
<div class="t" id="t-frame" style="left:1789.4px;top:46.2px;font-size:18.93px;color:#b9b9b9;-webkit-text-stroke:0.6px #b9b9b9;transform:scaleX(0.9377);transform-origin:0 0">Frame</div>
<div class="t" id="t-name" style="left:1724.8px;top:81.8px;font-size:13.52px;color:#fff;font-weight:bold;transform:scaleX(0.9035);transform-origin:0 0">Name</div>
<div class="t" id="t-length" style="left:1718.9px;top:114.7px;font-size:13.52px;color:#fff;font-weight:bold;transform:scaleX(0.8782);transform-origin:0 0">Length</div>
<div class="t" id="t-sound" style="left:1721.8px;top:147.6px;font-size:13.52px;color:#fff;font-weight:bold;transform:scaleX(0.8613);transform-origin:0 0">Sound</div>
<div class="t" id="t-noname" style="left:1768.6px;top:80.7px;font-size:14.98px;color:#787878;transform:scaleX(0.9432);transform-origin:0 0">no_name</div>
<div class="t" id="t-55" style="left:1768.8px;top:113.8px;font-size:14.56px;color:#fff;transform:scaleX(1.0867);transform-origin:0 0">55</div>
<div class="t" id="t-nosound" style="left:1773.9px;top:146.8px;font-size:14.04px;color:#333;transform:scaleX(1.0281);transform-origin:0 0">No Sound</div>
<div class="t" id="t-scripts" style="left:1780.2px;top:179.4px;font-size:14.56px;color:#fff;transform:scaleX(1.0058);transform-origin:0 0">Scripts</div>
<div class="t" id="t-default" style="left:1769.7px;top:207.2px;font-size:14.56px;color:#d0d0d0;transform:scaleX(1.0547);transform-origin:0 0">Default</div>
<div class="t" id="t-addscript" style="left:1765.2px;top:234.1px;font-size:14.56px;color:#000;transform:scaleX(0.9953);transform-origin:0 0">+ add script</div>
<div class="t" id="t-assetlib" style="left:1700.5px;top:691.9px;font-size:18.1px;color:#fff;transform:scaleX(0.9536);transform-origin:0 0">Asset Library</div>
<div class="t" id="t-filter" style="left:1729.5px;top:729.2px;font-size:14.35px;color:#c8c8c8;transform:scaleX(1.0122);transform-origin:0 0">filter...</div>
<div class="t" id="t-asset0" style="left:1736.0px;top:765.9px;font-size:13.73px;color:#f4f4f4;-webkit-text-stroke:0.35px #f4f4f4;transform:scaleX(1.0083);transform-origin:0 0">Recording (339).wav</div>
<div class="t" id="t-asset1" style="left:1736.0px;top:802.9px;font-size:13.73px;color:#f4f4f4;-webkit-text-stroke:0.35px #f4f4f4;transform:scaleX(1.0083);transform-origin:0 0">Recording (340).wav</div>
<div class="t" id="t-asset2" style="left:1736.4px;top:839.9px;font-size:13.73px;color:#f4f4f4;-webkit-text-stroke:0.35px #f4f4f4;transform:scaleX(1.0535);transform-origin:0 0">The story of jimbob.mp3</div>
<div class="t" id="t-asset3" style="left:1736.4px;top:876.9px;font-size:13.73px;color:#f4f4f4;-webkit-text-stroke:0.35px #f4f4f4;transform:scaleX(1.0802);transform-origin:0 0">thump.ogg</div>
<div class="t" id="t-asset4" style="left:1736.5px;top:913.9px;font-size:13.73px;color:#f4f4f4;-webkit-text-stroke:0.35px #f4f4f4;transform:scaleX(1.0320);transform-origin:0 0">videoplayback.mp3</div>
<div class="t" id="t-project" style="left:11.3px;top:714.5px;font-size:12.79px;color:#c4c4c4;transform:scaleX(0.9987);transform-origin:0 0">Project</div>
<div class="abs" style="left:7px;top:734px;width:144px;height:200px;overflow:hidden">
<div class="t" id="t-layer0" style="left:51.3px;top:44.2px;font-size:14.56px;color:#3a3a3a;transform:scaleX(0.9686);transform-origin:0 0">Layer</div>
<div class="t" id="t-layer1" style="left:51.3px;top:82.1px;font-size:14.56px;color:#3a3a3a;transform:scaleX(0.9935);transform-origin:0 0">Layer 2</div>
<div class="t" id="t-layer2" style="left:51.3px;top:120.0px;font-size:14.56px;color:#3a3a3a;transform:scaleX(0.9882);transform-origin:0 0">Layer 3</div>
<div class="t" id="t-layer3" style="left:51.3px;top:157.9px;font-size:14.56px;color:#3a3a3a;transform:scaleX(0.9830);transform-origin:0 0">Layer 4</div>
<div class="t" id="t-layer4" style="left:51.3px;top:195.8px;font-size:14.56px;color:#3a3a3a;transform:scaleX(0.9882);transform-origin:0 0">Layer 5</div>
</div>
</body>
</html>
